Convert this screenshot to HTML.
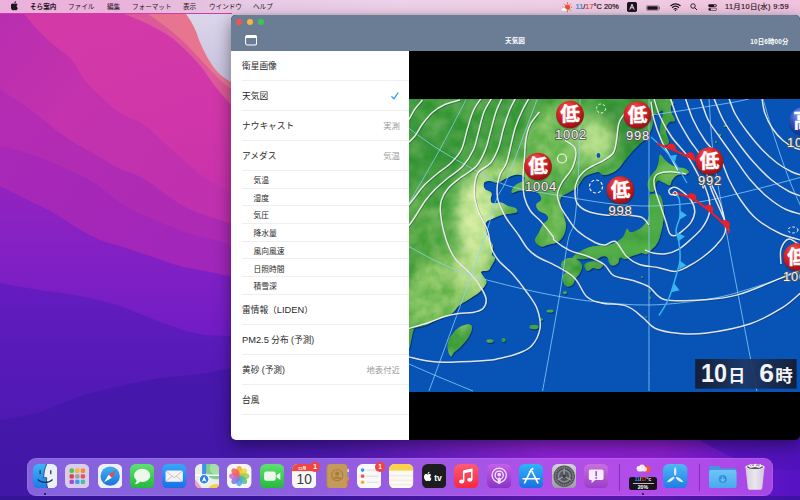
<!DOCTYPE html>
<html lang="ja">
<head>
<meta charset="utf-8">
<title>そら案内</title>
<style>
*{box-sizing:border-box;margin:0;padding:0}
html,body{width:800px;height:500px;overflow:hidden;background:#3c1a9c}
body{position:relative;font-family:"Liberation Sans","Noto Sans CJK JP",sans-serif;color:#222}
#wall{position:absolute;left:0;top:0;width:800px;height:500px}
#menubar{position:absolute;left:0;top:0;width:800px;height:13px;background:linear-gradient(90deg,#ecb1dc 0%,#eab3dc 16%,#e6bfde 24%,#e8cbe6 31%,#ebd1e9 50%,#eecfe5 68%,#f0c9e1 85%,#f0c2dd 100%);font-size:6.6px;line-height:13px;color:#1c1420;white-space:nowrap}
#menubar span{position:absolute;top:0}
#menubar .b{font-weight:700}
#win{position:absolute;left:231px;top:14.500px;width:569px;height:425.500px;border-radius:5px;overflow:hidden;background:#000;box-shadow:0 5px 16px rgba(0,0,0,.45)}
#hdr{position:absolute;left:0;top:0;width:570px;height:36.500px;background:#6a7d95}
.tl{position:absolute;top:4.600px;width:6.2px;height:6.2px;border-radius:50%}
#ttl{position:absolute;left:0;width:568px;top:21.500px;text-align:center;color:#fff;font-size:6.6px;font-weight:700;line-height:10px}
#tm{position:absolute;right:12.500px;top:22px;color:#fff;font-size:6.400px;font-weight:700;line-height:10px;letter-spacing:.15px}
#side{position:absolute;left:0;top:36.500px;width:178px;height:389px;background:#fff}
.row{position:absolute;left:0;width:178px;height:30px;font-size:8.700px;line-height:30px;padding-left:11px;color:#2a2a2a}
.row:after,.sub:after{content:"";position:absolute;left:11px;right:0;bottom:0;height:1px;background:#efefef}
.row i{position:absolute;right:9px;top:0;font-style:normal;color:#9a9a9a;font-size:8.400px}
.l{font-size:9.300px}
.sub{position:absolute;left:0;width:178px;height:17.7px;font-size:7.750px;line-height:19.700px;padding-left:22.5px;color:#2a2a2a}
#map{position:absolute;left:178px;top:84px;width:392px;height:293px}
</style>
</head>
<body>
<svg id="wall" viewBox="0 0 800 500" preserveAspectRatio="none">
<defs>
<linearGradient id="w0" x1="0" y1="0" x2="0" y2="1"><stop offset="0" stop-color="#b62bb0"/><stop offset=".35" stop-color="#b02ab4"/><stop offset=".55" stop-color="#7d1fc2"/><stop offset="1" stop-color="#5a18b4"/></linearGradient>
<linearGradient id="w1" gradientUnits="userSpaceOnUse" x1="120" y1="14" x2="180" y2="215"><stop offset="0" stop-color="#d339a7"/><stop offset=".6" stop-color="#d036a9"/><stop offset="1" stop-color="#c631ad"/></linearGradient>
<linearGradient id="wm" gradientUnits="userSpaceOnUse" x1="80" y1="14" x2="120" y2="240"><stop offset="0" stop-color="#c633ac"/><stop offset=".5" stop-color="#c130ae"/><stop offset="1" stop-color="#b02ab5"/></linearGradient>
<linearGradient id="wd" gradientUnits="userSpaceOnUse" x1="200" y1="215" x2="60" y2="330"><stop offset="0" stop-color="#b229b5"/><stop offset=".35" stop-color="#9b25bb"/><stop offset=".7" stop-color="#7a1fc3"/><stop offset="1" stop-color="#671cbf"/></linearGradient>
<linearGradient id="w5" gradientUnits="userSpaceOnUse" x1="239" y1="0" x2="800" y2="0"><stop offset="0" stop-color="#4217a8"/><stop offset=".18" stop-color="#4c18ae"/><stop offset=".36" stop-color="#6a1cbe"/><stop offset=".55" stop-color="#8a20d0"/><stop offset=".75" stop-color="#8a1ecd"/><stop offset=".9" stop-color="#6516c6"/><stop offset="1" stop-color="#5612c4"/></linearGradient>
<linearGradient id="wa" gradientUnits="userSpaceOnUse" x1="60" y1="14" x2="30" y2="300"><stop offset="0" stop-color="#b62db1"/><stop offset=".35" stop-color="#b32bb3"/><stop offset=".6" stop-color="#a026ba"/><stop offset=".85" stop-color="#7d20c3"/><stop offset="1" stop-color="#6a1cc0"/></linearGradient>
<linearGradient id="wl" x1="0" y1="0" x2="0" y2="1"><stop offset="0" stop-color="#dcd6ea"/><stop offset="1" stop-color="#c4bfdd"/></linearGradient>
<linearGradient id="wb" x1="0" y1="0" x2="0" y2="1"><stop offset="0" stop-color="#651cc0"/><stop offset=".5" stop-color="#5219b6"/><stop offset="1" stop-color="#4718ac"/></linearGradient>
<linearGradient id="wc" x1="0" y1="0" x2="0" y2="1"><stop offset="0" stop-color="#4817ac"/><stop offset="1" stop-color="#4017a6"/></linearGradient>
<linearGradient id="w6" x1="0" y1="0" x2="1" y2="0"><stop offset="0" stop-color="#3d1aa0"/><stop offset=".5" stop-color="#5a1cb0"/><stop offset="1" stop-color="#8a20c4"/></linearGradient>
<linearGradient id="g12" gradientUnits="userSpaceOnUse" x1="0" y1="20" x2="230" y2="215"><stop offset="0" stop-color="#b82eb0"/><stop offset=".35" stop-color="#c432ad"/><stop offset="1" stop-color="#bf30af"/></linearGradient>
<linearGradient id="g23" gradientUnits="userSpaceOnUse" x1="0" y1="90" x2="230" y2="240"><stop offset="0" stop-color="#b42cb2"/><stop offset="1" stop-color="#ad2ab5"/></linearGradient>
<linearGradient id="g34" gradientUnits="userSpaceOnUse" x1="0" y1="150" x2="230" y2="270"><stop offset="0" stop-color="#a828b7"/><stop offset="1" stop-color="#a026ba"/></linearGradient>
<linearGradient id="g45" gradientUnits="userSpaceOnUse" x1="0" y1="190" x2="0" y2="335"><stop offset="0" stop-color="#9123c0"/><stop offset=".5" stop-color="#8120c4"/><stop offset="1" stop-color="#711cc6"/></linearGradient>
</defs>
<rect width="800" height="500" fill="url(#w0)"/>
<!-- left wallpaper layers -->
<rect x="0" y="0" width="240" height="340" fill="url(#w1)"/>
<path d="M24.0 14.0C26.0 16.3 32.0 23.7 36.0 28.0C40.0 32.3 44.0 36.3 48.0 40.0C52.0 43.7 56.0 46.7 60.0 50.0C64.0 53.3 67.7 54.7 72.0 60.0C76.3 65.3 80.7 75.0 86.0 81.6C91.3 88.2 98.0 94.2 104.0 99.6C110.0 105.0 115.3 109.8 122.0 114.0C128.7 118.2 135.6 118.7 144.0 124.7C152.4 130.7 163.1 141.6 172.7 150.0C182.3 158.4 190.2 167.0 201.4 175.0C212.6 183.0 233.6 194.2 240.0 198.0L240 500L0 500L0 14Z" fill="url(#g12)"/>
<path d="M0.0 88.8C6.0 93.0 24.6 105.6 36.0 114.0C47.4 122.4 58.7 132.4 68.3 139.0C77.9 145.6 85.1 148.7 93.5 153.5C101.9 158.3 110.3 163.8 118.7 168.0C127.1 172.2 135.6 173.9 144.0 178.7C152.4 183.5 160.7 191.3 169.0 196.7C177.3 202.1 182.2 206.1 194.0 211.0C205.8 215.9 232.3 223.5 240.0 226.0L240 500L0 500Z" fill="url(#g23)"/>
<path d="M0.0 146.3C4.8 147.5 18.0 149.9 28.8 153.5C39.6 157.1 53.9 163.2 64.7 168.0C75.5 172.8 83.9 176.3 93.5 182.3C103.1 188.3 112.7 197.9 122.3 203.9C131.9 209.9 140.2 213.5 151.0 218.3C161.8 223.1 176.2 229.1 187.0 232.7C197.8 236.3 207.0 237.1 215.8 240.0C224.6 242.9 236.0 248.3 240.0 250.0L240 500L0 500Z" fill="url(#g34)"/>
<path d="M0.0 186.0C3.6 187.8 13.2 192.5 21.6 196.7C30.0 200.9 40.8 205.6 50.4 211.0C60.0 216.4 70.6 224.2 79.0 229.0C87.4 233.8 93.9 237.2 100.7 240.0C107.5 242.8 111.8 243.3 120.0 246.0C128.2 248.7 140.0 252.7 150.0 256.0C160.0 259.3 170.0 263.3 180.0 266.0C190.0 268.7 200.0 270.0 210.0 272.0C220.0 274.0 235.0 277.0 240.0 278.0L240 500L0 500Z" fill="url(#g45)"/>
<path d="M0.0 283.0C6.7 284.2 26.7 287.8 40.0 290.0C53.3 292.2 66.7 293.3 80.0 296.0C93.3 298.7 106.7 301.7 120.0 306.0C133.3 310.3 146.7 317.3 160.0 322.0C173.3 326.7 186.7 331.7 200.0 334.0C213.3 336.3 233.3 335.7 240.0 336.0L240 500L0 500Z" fill="url(#wb)"/>
<path d="M0.0 420.0C6.7 418.7 26.7 416.0 40.0 412.0C53.3 408.0 66.7 400.3 80.0 396.0C93.3 391.7 106.7 389.0 120.0 386.0C133.3 383.0 146.7 380.0 160.0 378.0C173.3 376.0 186.7 376.0 200.0 374.0C213.3 372.0 233.3 367.3 240.0 366.0L240 500L0 500Z" fill="url(#wc)"/>
<path d="M124 14C140 20 158 28 172 38C186 50 194 58 202 68C212 82 222 98 240 112V14Z" fill="#dc5a99"/>
<path d="M148 14C160 22 174 32 186 44C198 56 208 68 218 78C226 86 232 90 240 94V14Z" fill="#e7758f"/>
<path d="M186 14C192 22 196 30 199 40C204 52 209 61 215 69C221 77 230 82 240 86V14Z" fill="url(#wl)"/>
<rect x="232" y="0" width="568" height="20" fill="#dcc6e0"/>
<!-- bottom strip -->
<rect x="239" y="430" width="561" height="70" fill="url(#w5)"/>
<path d="M239 474C300 470 350 456 400 450C430 447 440 442 470 440H800V500H239Z" fill="url(#w6)" opacity=".0"/>
<path d="M700 440C720 452 740 462 760 466C775 470 790 470 800 470V440Z" fill="#4d12b6" opacity=".7"/>
<rect x="0" y="496" width="800" height="4" fill="#2c1288" opacity=".55"/>
</svg>

<div id="menubar">
<span style="left:10px;top:-.5px;font-size:9px"><svg width="8" height="10" viewBox="0 0 16 20" style="position:absolute;left:1px;top:1.8px"><path d="M11.2 4.3c.8-1 1.300-2.300 1.100-3.600-1.200.1-2.500.8-3.300 1.800-.7.900-1.300 2.200-1.100 3.500 1.300 0 2.500-.7 3.300-1.700zM12.300 6.200c-1.800-.1-3.300 1-4.200 1-.9 0-2.200-1-3.600-.9-1.900 0-3.600 1.100-4.500 2.800-1.900 3.300-.5 8.300 1.400 11 .9 1.300 2 2.800 3.400 2.700 1.400-.1 1.900-.9 3.500-.9s2.100.9 3.600.8c1.500 0 2.400-1.300 3.300-2.700 1-1.500 1.500-3 1.500-3.100-.1 0-2.900-1.100-2.900-4.400 0-2.700 2.200-4 2.300-4.100-1.300-1.900-3.200-2.100-3.800-2.200z" fill="#1c1420" transform="scale(.82)"/></svg></span>
<span class="b" style="left:30px">そら案内</span>
<span style="left:68px">ファイル</span>
<span style="left:107px">編集</span>
<span style="left:132px">フォーマット</span>
<span style="left:183px">表示</span>
<span style="left:209px">ウインドウ</span>
<span style="left:253px">ヘルプ</span>
<svg style="position:absolute;left:560px;top:1.500px" width="12" height="11" viewBox="0 0 24 22"><g stroke="#f0562e" stroke-width="1.800"><path d="M15 .5V4M15 17V20.500M5 10.500H8M22 10.500H25M8 3.500 10 5.500M22 3.500 20 5.500M8 17.500 10 15.500M22 17.500 20 15.500"/></g><circle cx="15" cy="10.500" r="5.400" fill="#f0562e"/><path d="M3 17.500a2.600 2.600 0 0 1 1.600-4.600 3.600 3.600 0 0 1 6.800.6 2.500 2.500 0 0 1 .2 5H5a2.600 2.600 0 0 1-2-1z" fill="#fff" stroke="#d8a8c8" stroke-width=".5"/></svg>
<span style="left:575.600px;font-size:7.400px;-webkit-text-stroke:.2px #1c1420"><b style="color:#2b86d9;font-weight:400;-webkit-text-stroke:.2px #2b86d9">11</b>/<b style="color:#e0483a;font-weight:400;-webkit-text-stroke:.2px #e0483a">17</b>°C 20%</span>
<svg style="position:absolute;left:626.800px;top:2px" width="10" height="10" viewBox="0 0 20 20"><rect width="20" height="20" rx="3.500" fill="#1c1420"/><path d="M5.500 15.500 10 4.500 14.500 15.500M7.300 11.500H12.700" fill="none" stroke="#f0d8ec" stroke-width="2"/></svg>
<svg style="position:absolute;left:646.300px;top:4.500px" width="14.500" height="6" viewBox="0 0 29 12"><rect x=".7" y=".7" width="24.600" height="10.600" rx="3" fill="none" stroke="#1c1420" stroke-opacity=".55" stroke-width="1.200"/><rect x="2.500" y="2.500" width="21" height="7" rx="1.600" fill="#1c1420"/><path d="M27 4V8" stroke="#1c1420" stroke-opacity=".55" stroke-width="1.800" stroke-linecap="round"/></svg>
<svg style="position:absolute;left:669.500px;top:3px" width="11" height="8" viewBox="0 0 22 16"><path d="M1.500 5.500a14 14 0 0 1 19 0M4.800 9a9.500 9.500 0 0 1 12.400 0M8 12.300a4.800 4.800 0 0 1 6 0" fill="none" stroke="#1c1420" stroke-width="2.100" stroke-linecap="round"/><circle cx="11" cy="14.300" r="1.500" fill="#1c1420"/></svg>
<svg style="position:absolute;left:690px;top:3.300px" width="7.500" height="7.500" viewBox="0 0 15 15"><circle cx="6" cy="6" r="4.500" fill="none" stroke="#1c1420" stroke-width="1.800"/><path d="M9.500 9.500 13.500 13.500" stroke="#1c1420" stroke-width="2" stroke-linecap="round"/></svg>
<svg style="position:absolute;left:708px;top:3.800px" width="9" height="7" viewBox="0 0 18 14"><rect x=".5" y=".5" width="17" height="5.600" rx="2.800" fill="#1c1420"/><circle cx="13.800" cy="3.300" r="1.700" fill="#e8bfdc"/><rect x="1" y="8" width="16" height="5.200" rx="2.600" fill="none" stroke="#1c1420" stroke-width="1.200"/><circle cx="4" cy="10.600" r="2" fill="#1c1420"/></svg>
<span style="left:725px;font-size:7.400px;letter-spacing:.32px;-webkit-text-stroke:.15px #1c1420">11月10日(水) 9:59</span>
</div>

<div id="win">
<div id="hdr">
<div class="tl" style="left:4.5px;background:#f0564d"></div>
<div class="tl" style="left:15.8px;background:#f6b73c"></div>
<div class="tl" style="left:27px;background:#3bc651"></div>
<svg style="position:absolute;left:14.200px;top:20.600px" width="12.200" height="10.600" viewBox="0 0 12.200 10.600"><rect x=".6" y=".6" width="11" height="9.400" rx="1.700" fill="none" stroke="#fff" stroke-width="1.050"/><rect x=".6" y=".6" width="11" height="2.300" rx="1" fill="#fff"/></svg>
<div id="ttl">天気図</div>
<div id="tm">10日6時00分</div>
</div>
<div id="side">
<div class="row" style="top:0">衛星画像</div>
<div class="row" style="top:30px">天気図<svg style="position:absolute;right:10px;top:10.5px" width="8" height="8" viewBox="0 0 8 8"><path d="M.8 4.600 2.900 6.900 7 1" fill="none" stroke="#2a9be8" stroke-width="1.250" stroke-linecap="round" stroke-linejoin="round"/></svg></div>
<div class="row" style="top:60px">ナウキャスト<i>実測</i></div>
<div class="row" style="top:90px">アメダス<i>気温</i></div>
<div class="sub" style="top:120px">気温</div>
<div class="sub" style="top:137.700px">湿度</div>
<div class="sub" style="top:155.400px">気圧</div>
<div class="sub" style="top:173.100px">降水量</div>
<div class="sub" style="top:190.800px">風向風速</div>
<div class="sub" style="top:208.500px">日照時間</div>
<div class="sub" style="top:226.200px">積雪深</div>
<div class="row" style="top:244px">雷情報（<span class="l">LIDEN</span>）</div>
<div class="row" style="top:274px"><span class="l">PM2.5</span> 分布 (予測)</div>
<div class="row" style="top:304px">黄砂 (予測)<i>地表付近</i></div>
<div class="row" style="top:334px">台風</div>
</div>
<svg id="map" viewBox="0 0 392 293" preserveAspectRatio="none">
<defs>
<clipPath id="lc"><path d="M-2.0 -2.0C47.0 -48.3 193.9 -6.0 243.0 -2.0C292.1 2.0 243.5 12.0 243.5 18.0C243.5 24.0 244.1 24.0 243.0 28.0C241.9 32.0 240.8 34.3 238.0 38.0C235.2 41.7 232.3 43.2 229.0 46.5C225.7 49.8 224.3 51.3 221.5 54.5C218.7 57.7 217.5 59.4 215.0 62.5C212.5 65.6 211.7 67.6 209.0 70.0C206.3 72.4 204.5 73.3 201.5 74.5C198.5 75.7 196.4 76.3 194.0 76.0C191.6 75.7 191.6 73.3 189.5 73.0C187.4 72.7 186.2 73.6 183.5 74.5C180.8 75.4 178.4 75.7 176.0 77.5C173.6 79.3 173.2 81.2 171.5 83.5C169.8 85.8 169.8 87.0 167.5 89.0C165.2 91.0 163.1 91.6 160.0 93.5C156.9 95.4 153.6 95.7 152.0 98.5C150.4 101.3 151.4 103.7 152.0 107.5C152.6 111.3 154.0 113.5 155.0 117.5C156.0 121.5 157.2 123.5 157.0 127.5C156.8 131.5 155.8 134.3 154.0 137.5C152.2 140.7 150.8 141.9 148.0 143.5C145.2 145.1 143.2 144.7 140.0 145.5C136.8 146.3 134.8 148.3 132.0 147.5C129.2 146.7 126.4 144.3 126.0 141.5C125.6 138.7 128.4 136.7 130.0 133.5C131.6 130.3 132.2 128.1 134.0 125.5C135.8 122.9 138.4 122.3 139.0 120.3C139.6 118.3 138.7 117.1 137.0 115.5C135.3 113.9 132.4 114.2 130.4 112.3C128.4 110.4 126.9 108.1 127.2 105.9C127.5 103.7 131.4 103.2 132.0 101.1C132.6 99.0 132.0 97.3 130.4 95.5C128.8 93.7 127.8 93.1 124.0 92.3C120.2 91.5 115.4 91.2 111.2 91.5C107.0 91.8 104.6 94.4 103.2 93.9C101.8 93.4 103.0 90.9 104.0 89.1C105.0 87.3 105.9 86.5 108.0 85.1C110.1 83.7 113.0 83.3 114.4 81.9C115.8 80.5 116.5 79.2 115.2 77.9C113.9 76.6 111.7 75.2 108.0 75.5C104.3 75.8 100.6 77.9 96.8 79.5C93.0 81.1 92.0 83.0 88.8 83.5C85.6 84.0 83.5 81.9 80.8 81.9C78.1 81.9 76.2 81.9 75.2 83.5C74.2 85.1 74.6 87.8 76.0 89.9C77.4 92.0 81.3 91.7 82.4 93.9C83.5 96.1 81.3 99.0 81.6 101.1C81.9 103.2 81.9 103.8 84.0 104.3C86.1 104.8 89.1 103.0 92.0 103.5C94.9 104.0 95.5 105.6 98.4 106.7C101.3 107.8 104.5 107.8 106.4 109.1C108.3 110.4 109.0 112.0 108.0 113.1C107.0 114.2 104.8 114.1 101.6 114.7C98.4 115.3 95.5 115.3 92.0 116.3C88.5 117.3 87.0 118.1 84.0 119.5C81.0 120.9 78.4 121.1 77.0 123.5C75.6 125.9 76.4 128.3 77.0 131.5C77.6 134.7 78.6 136.3 80.0 139.5C81.4 142.7 83.4 144.3 84.0 147.5C84.6 150.7 82.6 153.1 83.0 155.5C83.4 157.9 86.2 157.1 86.0 159.5C85.8 161.9 83.4 165.1 82.0 167.5C80.6 169.9 81.0 170.4 79.0 171.5C77.0 172.6 72.4 171.0 72.0 173.0C71.6 175.0 76.2 178.8 77.0 181.5C77.8 184.2 77.4 184.1 76.0 186.5C74.6 188.9 72.4 191.3 70.0 193.5C67.6 195.7 66.4 195.9 64.0 197.5C61.6 199.1 60.8 199.7 58.0 201.5C55.2 203.3 52.8 204.1 50.0 206.5C47.2 208.9 46.8 211.3 44.0 213.5C41.2 215.7 39.6 215.9 36.0 217.5C32.4 219.1 30.0 219.7 26.0 221.5C22.0 223.3 20.0 225.1 16.0 226.5C12.0 227.9 9.6 227.9 6.0 228.5C2.4 229.1 -0.4 275.6 -2.0 229.5C-3.6 183.4 -51.0 44.3 -2.0 -2.0Z M243.0 95.0C244.7 94.6 247.1 94.7 249.0 95.5C250.9 96.3 251.3 96.5 252.4 99.0C253.5 101.5 254.1 103.3 254.5 108.0C254.9 112.7 255.0 116.4 254.2 122.5C253.4 128.6 252.0 134.0 250.6 138.7C249.2 143.4 248.4 143.7 247.0 145.9C245.6 148.1 245.2 147.7 243.4 149.5C241.6 151.3 240.2 154.0 238.0 154.9C235.8 155.8 234.8 153.8 232.6 154.0C230.4 154.2 229.4 155.1 227.2 155.8C225.0 156.5 224.0 156.7 221.8 157.6C219.6 158.5 218.6 160.1 216.4 160.3C214.2 160.5 212.4 157.8 211.0 158.5C209.6 159.2 210.6 162.3 209.2 163.9C207.8 165.5 205.6 166.6 203.8 166.6C202.0 166.6 201.3 165.5 200.2 163.9C199.1 162.3 199.8 159.8 198.4 158.5C197.0 157.2 195.2 157.2 193.0 157.6C190.8 158.0 190.1 159.9 187.6 160.3C185.1 160.7 183.6 159.4 180.4 159.4C177.2 159.4 174.6 160.5 171.4 160.3C168.2 160.1 165.3 159.4 164.2 158.5C163.1 157.6 164.6 157.1 166.0 155.8C167.4 154.5 169.2 153.5 171.4 152.2C173.6 150.9 174.6 150.4 176.8 149.5C179.0 148.6 179.7 148.2 182.2 147.7C184.7 147.2 186.2 147.2 189.4 146.8C192.6 146.4 195.2 146.4 198.4 145.9C201.6 145.4 203.1 145.2 205.6 144.1C208.1 143.0 209.2 141.9 211.0 140.5C212.8 139.1 213.2 139.1 214.6 136.9C216.0 134.7 216.8 130.4 218.2 129.7C219.6 129.0 219.3 133.3 221.8 133.3C224.3 133.3 227.9 131.5 230.8 129.7C233.7 127.9 234.4 126.8 236.2 124.3C238.0 121.8 239.1 120.5 239.8 117.1C240.5 113.7 239.3 111.4 239.5 107.5C239.7 103.6 239.9 100.2 240.6 97.7C241.3 95.2 241.3 95.4 243.0 95.0Z M251.1 55.7C252.2 55.1 253.2 57.9 255.3 59.9C257.4 61.9 258.9 63.8 261.6 65.5C264.3 67.2 265.7 67.5 268.6 68.3C271.5 69.1 274.1 68.6 276.3 69.7C278.5 70.8 280.5 72.8 279.8 73.9C279.1 75.0 275.3 74.7 272.8 75.3C270.3 75.9 269.2 75.4 267.2 76.7C265.2 78.0 264.3 79.6 263.0 81.6C261.7 83.6 262.6 86.1 260.9 86.5C259.2 86.9 257.0 84.7 254.6 83.7C252.2 82.7 250.5 81.3 249.0 81.6C247.5 81.9 247.5 83.4 246.9 85.1C246.3 86.8 246.7 88.4 246.0 90.0C245.3 91.6 244.7 92.7 243.5 93.0C242.3 93.3 241.0 93.1 240.0 91.5C239.0 89.9 238.4 87.5 238.5 85.0C238.6 82.5 239.5 81.1 240.5 79.0C241.5 76.9 242.1 76.5 243.5 74.6C244.9 72.7 246.4 72.1 247.6 69.7C248.8 67.3 249.0 65.5 249.7 62.7C250.4 59.9 250.0 56.3 251.1 55.7Z M251.0 -2.0C252.6 -5.1 259.8 -4.7 262.0 -2.0C264.2 0.7 261.2 6.8 262.0 11.5C262.8 16.2 266.4 19.1 266.0 21.5C265.6 23.9 261.8 21.5 260.0 23.5C258.2 25.5 257.0 27.5 257.0 31.5C257.0 35.5 260.6 40.7 260.0 43.5C259.4 46.3 255.8 47.1 254.0 45.5C252.2 43.9 251.4 39.9 251.0 35.5C250.6 31.1 251.4 27.9 252.0 23.5C252.6 19.1 254.2 18.6 254.0 13.5C253.8 8.4 249.4 1.1 251.0 -2.0Z M155.2 160.7C157.8 159.1 161.3 158.1 164.8 159.1C168.3 160.1 171.5 162.6 172.8 165.5C174.1 168.4 172.5 170.6 171.2 173.5C169.9 176.4 168.1 177.3 166.5 179.9C164.9 182.5 165.0 184.9 163.0 186.3C161.0 187.7 158.4 188.4 156.5 186.8C154.6 185.2 153.5 181.3 153.6 178.3C153.7 175.3 157.1 174.1 156.8 171.9C156.5 169.7 152.3 169.3 152.0 167.1C151.7 164.9 152.6 162.3 155.2 160.7Z M176.0 165.0C177.2 163.7 179.2 162.9 182.0 162.5C184.8 162.1 187.6 162.3 190.0 163.0C192.4 163.7 194.0 164.6 194.0 166.0C194.0 167.4 192.0 169.4 190.0 170.0C188.0 170.6 186.2 168.6 184.0 169.0C181.8 169.4 180.6 172.0 179.0 172.0C177.4 172.0 176.6 170.4 176.0 169.0C175.4 167.6 174.8 166.3 176.0 165.0Z M60.0 225.5C61.4 226.0 63.0 226.1 63.0 228.5C63.0 230.9 62.2 233.7 60.0 237.5C57.8 241.3 55.0 244.3 52.0 247.5C49.0 250.7 47.0 251.5 45.0 253.5C43.0 255.5 43.2 257.9 42.0 257.5C40.8 257.1 39.6 254.3 39.0 251.5C38.4 248.7 38.2 246.7 39.0 243.5C39.8 240.3 40.8 238.5 43.0 235.5C45.2 232.5 47.4 230.4 50.0 228.5C52.6 226.6 54.0 226.6 56.0 226.0C58.0 225.4 58.6 225.0 60.0 225.5ZM77.5 242.0a3.5 1.8 0 1 0 7.0 0a3.5 1.8 0 1 0 -7.0 0ZM92.6 241.0a2 2 0 1 0 4 0a2 2 0 1 0 -4 0ZM120.5 228.0a4.5 2.2 0 1 0 9.0 0a4.5 2.2 0 1 0 -9.0 0ZM137.5 212.0a3.5 1.5 0 1 0 7.0 0a3.5 1.5 0 1 0 -7.0 0ZM130.0 220.5a2 1.2 0 1 0 4 0a2 1.2 0 1 0 -4 0ZM154.0 193.5a2 1.5 0 1 0 4 0a2 1.5 0 1 0 -4 0ZM232.0 178.0a1 1 0 1 0 2 0a1 1 0 1 0 -2 0ZM240.2 192.0a0.8 1.6 0 1 0 1.6 0a0.8 1.6 0 1 0 -1.6 0ZM240.2 199.0a0.8 1.4 0 1 0 1.6 0a0.8 1.4 0 1 0 -1.6 0ZM314.5 27.0a1.5 1 0 1 0 3.0 0a1.5 1 0 1 0 -3.0 0ZM309.8 36.0a1.2 1.2 0 1 0 2.4 0a1.2 1.2 0 1 0 -2.4 0ZM306.0 43.0a1 1.2 0 1 0 2 0a1 1.2 0 1 0 -2 0ZM302.0 50.0a1 1 0 1 0 2 0a1 1 0 1 0 -2 0ZM236.2 218.0a0.8 0.8 0 1 0 1.6 0a0.8 0.8 0 1 0 -1.6 0Z"/></clipPath>
<radialGradient id="lowg" cx=".4" cy=".3" r=".75"><stop offset="0" stop-color="#f4605a"/><stop offset=".45" stop-color="#d8252a"/><stop offset="1" stop-color="#8e0f14"/></radialGradient>
<radialGradient id="highg" cx=".4" cy=".3" r=".75"><stop offset="0" stop-color="#9ab0f0"/><stop offset=".45" stop-color="#3a55c8"/><stop offset="1" stop-color="#16247a"/></radialGradient>
<linearGradient id="dbg" x1="0" y1="0" x2="1" y2="0"><stop offset="0" stop-color="#141c33" stop-opacity=".95"/><stop offset=".5" stop-color="#1f3763" stop-opacity=".92"/><stop offset="1" stop-color="#141c33" stop-opacity=".95"/></linearGradient>
<filter id="bl" x="-20%" y="-20%" width="140%" height="140%"><feGaussianBlur stdDeviation="6"/></filter>
<filter id="bs" x="-20%" y="-20%" width="140%" height="140%"><feGaussianBlur stdDeviation="3"/></filter>
<filter id="tx2" x="0" y="0" width="100%" height="100%"><feTurbulence type="fractalNoise" baseFrequency=".06" numOctaves="2" seed="11"/><feColorMatrix values="0 0 0 0 .8  0 0 0 0 .95  0 0 0 0 .42  0 0 .9 0 -.32"/></filter>
<filter id="tx" x="0" y="0" width="100%" height="100%"><feTurbulence type="fractalNoise" baseFrequency=".09" numOctaves="3" seed="4"/><feColorMatrix values="0 0 0 0 0  0 0 0 0 .25  0 0 0 0 0  0 0 0 .9 -.28"/></filter>
</defs>
<rect width="392" height="293" fill="#0753b6"/>
<path d="M-2.0 -2.0C47.0 -48.3 193.9 -6.0 243.0 -2.0C292.1 2.0 243.5 12.0 243.5 18.0C243.5 24.0 244.1 24.0 243.0 28.0C241.9 32.0 240.8 34.3 238.0 38.0C235.2 41.7 232.3 43.2 229.0 46.5C225.7 49.8 224.3 51.3 221.5 54.5C218.7 57.7 217.5 59.4 215.0 62.5C212.5 65.6 211.7 67.6 209.0 70.0C206.3 72.4 204.5 73.3 201.5 74.5C198.5 75.7 196.4 76.3 194.0 76.0C191.6 75.7 191.6 73.3 189.5 73.0C187.4 72.7 186.2 73.6 183.5 74.5C180.8 75.4 178.4 75.7 176.0 77.5C173.6 79.3 173.2 81.2 171.5 83.5C169.8 85.8 169.8 87.0 167.5 89.0C165.2 91.0 163.1 91.6 160.0 93.5C156.9 95.4 153.6 95.7 152.0 98.5C150.4 101.3 151.4 103.7 152.0 107.5C152.6 111.3 154.0 113.5 155.0 117.5C156.0 121.5 157.2 123.5 157.0 127.5C156.8 131.5 155.8 134.3 154.0 137.5C152.2 140.7 150.8 141.9 148.0 143.5C145.2 145.1 143.2 144.7 140.0 145.5C136.8 146.3 134.8 148.3 132.0 147.5C129.2 146.7 126.4 144.3 126.0 141.5C125.6 138.7 128.4 136.7 130.0 133.5C131.6 130.3 132.2 128.1 134.0 125.5C135.8 122.9 138.4 122.3 139.0 120.3C139.6 118.3 138.7 117.1 137.0 115.5C135.3 113.9 132.4 114.2 130.4 112.3C128.4 110.4 126.9 108.1 127.2 105.9C127.5 103.7 131.4 103.2 132.0 101.1C132.6 99.0 132.0 97.3 130.4 95.5C128.8 93.7 127.8 93.1 124.0 92.3C120.2 91.5 115.4 91.2 111.2 91.5C107.0 91.8 104.6 94.4 103.2 93.9C101.8 93.4 103.0 90.9 104.0 89.1C105.0 87.3 105.9 86.5 108.0 85.1C110.1 83.7 113.0 83.3 114.4 81.9C115.8 80.5 116.5 79.2 115.2 77.9C113.9 76.6 111.7 75.2 108.0 75.5C104.3 75.8 100.6 77.9 96.8 79.5C93.0 81.1 92.0 83.0 88.8 83.5C85.6 84.0 83.5 81.9 80.8 81.9C78.1 81.9 76.2 81.9 75.2 83.5C74.2 85.1 74.6 87.8 76.0 89.9C77.4 92.0 81.3 91.7 82.4 93.9C83.5 96.1 81.3 99.0 81.6 101.1C81.9 103.2 81.9 103.8 84.0 104.3C86.1 104.8 89.1 103.0 92.0 103.5C94.9 104.0 95.5 105.6 98.4 106.7C101.3 107.8 104.5 107.8 106.4 109.1C108.3 110.4 109.0 112.0 108.0 113.1C107.0 114.2 104.8 114.1 101.6 114.7C98.4 115.3 95.5 115.3 92.0 116.3C88.5 117.3 87.0 118.1 84.0 119.5C81.0 120.9 78.4 121.1 77.0 123.5C75.6 125.9 76.4 128.3 77.0 131.5C77.6 134.7 78.6 136.3 80.0 139.5C81.4 142.7 83.4 144.3 84.0 147.5C84.6 150.7 82.6 153.1 83.0 155.5C83.4 157.9 86.2 157.1 86.0 159.5C85.8 161.9 83.4 165.1 82.0 167.5C80.6 169.9 81.0 170.4 79.0 171.5C77.0 172.6 72.4 171.0 72.0 173.0C71.6 175.0 76.2 178.8 77.0 181.5C77.8 184.2 77.4 184.1 76.0 186.5C74.6 188.9 72.4 191.3 70.0 193.5C67.6 195.7 66.4 195.9 64.0 197.5C61.6 199.1 60.8 199.7 58.0 201.5C55.2 203.3 52.8 204.1 50.0 206.5C47.2 208.9 46.8 211.3 44.0 213.5C41.2 215.7 39.6 215.9 36.0 217.5C32.4 219.1 30.0 219.7 26.0 221.5C22.0 223.3 20.0 225.1 16.0 226.5C12.0 227.9 9.6 227.9 6.0 228.5C2.4 229.1 -0.4 275.6 -2.0 229.5C-3.6 183.4 -51.0 44.3 -2.0 -2.0Z M243.0 95.0C244.7 94.6 247.1 94.7 249.0 95.5C250.9 96.3 251.3 96.5 252.4 99.0C253.5 101.5 254.1 103.3 254.5 108.0C254.9 112.7 255.0 116.4 254.2 122.5C253.4 128.6 252.0 134.0 250.6 138.7C249.2 143.4 248.4 143.7 247.0 145.9C245.6 148.1 245.2 147.7 243.4 149.5C241.6 151.3 240.2 154.0 238.0 154.9C235.8 155.8 234.8 153.8 232.6 154.0C230.4 154.2 229.4 155.1 227.2 155.8C225.0 156.5 224.0 156.7 221.8 157.6C219.6 158.5 218.6 160.1 216.4 160.3C214.2 160.5 212.4 157.8 211.0 158.5C209.6 159.2 210.6 162.3 209.2 163.9C207.8 165.5 205.6 166.6 203.8 166.6C202.0 166.6 201.3 165.5 200.2 163.9C199.1 162.3 199.8 159.8 198.4 158.5C197.0 157.2 195.2 157.2 193.0 157.6C190.8 158.0 190.1 159.9 187.6 160.3C185.1 160.7 183.6 159.4 180.4 159.4C177.2 159.4 174.6 160.5 171.4 160.3C168.2 160.1 165.3 159.4 164.2 158.5C163.1 157.6 164.6 157.1 166.0 155.8C167.4 154.5 169.2 153.5 171.4 152.2C173.6 150.9 174.6 150.4 176.8 149.5C179.0 148.6 179.7 148.2 182.2 147.7C184.7 147.2 186.2 147.2 189.4 146.8C192.6 146.4 195.2 146.4 198.4 145.9C201.6 145.4 203.1 145.2 205.6 144.1C208.1 143.0 209.2 141.9 211.0 140.5C212.8 139.1 213.2 139.1 214.6 136.9C216.0 134.7 216.8 130.4 218.2 129.7C219.6 129.0 219.3 133.3 221.8 133.3C224.3 133.3 227.9 131.5 230.8 129.7C233.7 127.9 234.4 126.8 236.2 124.3C238.0 121.8 239.1 120.5 239.8 117.1C240.5 113.7 239.3 111.4 239.5 107.5C239.7 103.6 239.9 100.2 240.6 97.7C241.3 95.2 241.3 95.4 243.0 95.0Z M251.1 55.7C252.2 55.1 253.2 57.9 255.3 59.9C257.4 61.9 258.9 63.8 261.6 65.5C264.3 67.2 265.7 67.5 268.6 68.3C271.5 69.1 274.1 68.6 276.3 69.7C278.5 70.8 280.5 72.8 279.8 73.9C279.1 75.0 275.3 74.7 272.8 75.3C270.3 75.9 269.2 75.4 267.2 76.7C265.2 78.0 264.3 79.6 263.0 81.6C261.7 83.6 262.6 86.1 260.9 86.5C259.2 86.9 257.0 84.7 254.6 83.7C252.2 82.7 250.5 81.3 249.0 81.6C247.5 81.9 247.5 83.4 246.9 85.1C246.3 86.8 246.7 88.4 246.0 90.0C245.3 91.6 244.7 92.7 243.5 93.0C242.3 93.3 241.0 93.1 240.0 91.5C239.0 89.9 238.4 87.5 238.5 85.0C238.6 82.5 239.5 81.1 240.5 79.0C241.5 76.9 242.1 76.5 243.5 74.6C244.9 72.7 246.4 72.1 247.6 69.7C248.8 67.3 249.0 65.5 249.7 62.7C250.4 59.9 250.0 56.3 251.1 55.7Z M251.0 -2.0C252.6 -5.1 259.8 -4.7 262.0 -2.0C264.2 0.7 261.2 6.8 262.0 11.5C262.8 16.2 266.4 19.1 266.0 21.5C265.6 23.9 261.8 21.5 260.0 23.5C258.2 25.5 257.0 27.5 257.0 31.5C257.0 35.5 260.6 40.7 260.0 43.5C259.4 46.3 255.8 47.1 254.0 45.5C252.2 43.9 251.4 39.9 251.0 35.5C250.6 31.1 251.4 27.9 252.0 23.5C252.6 19.1 254.2 18.6 254.0 13.5C253.8 8.4 249.4 1.1 251.0 -2.0Z M155.2 160.7C157.8 159.1 161.3 158.1 164.8 159.1C168.3 160.1 171.5 162.6 172.8 165.5C174.1 168.4 172.5 170.6 171.2 173.5C169.9 176.4 168.1 177.3 166.5 179.9C164.9 182.5 165.0 184.9 163.0 186.3C161.0 187.7 158.4 188.4 156.5 186.8C154.6 185.2 153.5 181.3 153.6 178.3C153.7 175.3 157.1 174.1 156.8 171.9C156.5 169.7 152.3 169.3 152.0 167.1C151.7 164.9 152.6 162.3 155.2 160.7Z M176.0 165.0C177.2 163.7 179.2 162.9 182.0 162.5C184.8 162.1 187.6 162.3 190.0 163.0C192.4 163.7 194.0 164.6 194.0 166.0C194.0 167.4 192.0 169.4 190.0 170.0C188.0 170.6 186.2 168.6 184.0 169.0C181.8 169.4 180.6 172.0 179.0 172.0C177.4 172.0 176.6 170.4 176.0 169.0C175.4 167.6 174.8 166.3 176.0 165.0Z M60.0 225.5C61.4 226.0 63.0 226.1 63.0 228.5C63.0 230.9 62.2 233.7 60.0 237.5C57.8 241.3 55.0 244.3 52.0 247.5C49.0 250.7 47.0 251.5 45.0 253.5C43.0 255.5 43.2 257.9 42.0 257.5C40.8 257.1 39.6 254.3 39.0 251.5C38.4 248.7 38.2 246.7 39.0 243.5C39.8 240.3 40.8 238.5 43.0 235.5C45.2 232.5 47.4 230.4 50.0 228.5C52.6 226.6 54.0 226.6 56.0 226.0C58.0 225.4 58.6 225.0 60.0 225.5ZM77.5 242.0a3.5 1.8 0 1 0 7.0 0a3.5 1.8 0 1 0 -7.0 0ZM92.6 241.0a2 2 0 1 0 4 0a2 2 0 1 0 -4 0ZM120.5 228.0a4.5 2.2 0 1 0 9.0 0a4.5 2.2 0 1 0 -9.0 0ZM137.5 212.0a3.5 1.5 0 1 0 7.0 0a3.5 1.5 0 1 0 -7.0 0ZM130.0 220.5a2 1.2 0 1 0 4 0a2 1.2 0 1 0 -4 0ZM154.0 193.5a2 1.5 0 1 0 4 0a2 1.5 0 1 0 -4 0ZM232.0 178.0a1 1 0 1 0 2 0a1 1 0 1 0 -2 0ZM240.2 192.0a0.8 1.6 0 1 0 1.6 0a0.8 1.6 0 1 0 -1.6 0ZM240.2 199.0a0.8 1.4 0 1 0 1.6 0a0.8 1.4 0 1 0 -1.6 0ZM314.5 27.0a1.5 1 0 1 0 3.0 0a1.5 1 0 1 0 -3.0 0ZM309.8 36.0a1.2 1.2 0 1 0 2.4 0a1.2 1.2 0 1 0 -2.4 0ZM306.0 43.0a1 1.2 0 1 0 2 0a1 1.2 0 1 0 -2 0ZM302.0 50.0a1 1 0 1 0 2 0a1 1 0 1 0 -2 0ZM236.2 218.0a0.8 0.8 0 1 0 1.6 0a0.8 0.8 0 1 0 -1.6 0Z" fill="#06307e" transform="translate(.9 1.300)" opacity=".85"/>
<g clip-path="url(#lc)">
<rect width="392" height="293" fill="#4ba346"/>
<g filter="url(#bl)">
<ellipse cx="60" cy="15" rx="90" ry="38" fill="#3f9a40"/>
<ellipse cx="15" cy="60" rx="35" ry="30" fill="#3a953d"/>
<ellipse cx="222" cy="25" rx="30" ry="34" fill="#348f3b"/>
<ellipse cx="5" cy="110" rx="22" ry="60" fill="#3f983f"/>
<ellipse cx="150" cy="42" rx="32" ry="36" fill="#7cc060"/>
<ellipse cx="186" cy="42" rx="18" ry="24" fill="#a8d882"/>
<ellipse cx="70" cy="118" rx="24" ry="46" fill="#bfe092"/>
<ellipse cx="68" cy="125" rx="18" ry="40" fill="#c8e69a"/>
<ellipse cx="66" cy="120" rx="12" ry="30" fill="#cce89c"/>
<ellipse cx="98" cy="72" rx="30" ry="12" fill="#a6d47a"/>
<ellipse cx="45" cy="190" rx="42" ry="38" fill="#8ec868"/>
<ellipse cx="66" cy="168" rx="18" ry="22" fill="#b6db88"/>
<ellipse cx="12" cy="130" rx="24" ry="34" fill="#58a84a"/>
<ellipse cx="20" cy="210" rx="28" ry="20" fill="#86c464"/>
<ellipse cx="143" cy="122" rx="14" ry="26" fill="#74bd5a"/>
<ellipse cx="114" cy="99" rx="14" ry="8" fill="#a0d074"/>
</g>
<rect width="392" height="293" filter="url(#tx)" opacity=".68"/>
<rect width="392" height="293" filter="url(#tx2)" opacity=".5"/>
<g filter="url(#bl)" opacity=".55"><ellipse cx="68" cy="122" rx="15" ry="40" fill="#dcf0a8"/><ellipse cx="60" cy="175" rx="14" ry="16" fill="#d4eca0"/><ellipse cx="188" cy="42" rx="12" ry="18" fill="#c8e898"/></g>
<g filter="url(#bs)" opacity=".9">
<ellipse cx="215" cy="150" rx="40" ry="8" fill="#52b048"/>
<ellipse cx="247" cy="118" rx="8" ry="28" fill="#4eac46"/>
<ellipse cx="262" cy="72" rx="16" ry="10" fill="#6cbc58"/>
</g>
</g>
<path d="M57.0 0.5C52.5 9.1 39.5 34.8 30.0 52.0C20.5 69.2 5.0 95.3 0.0 104.0 M0.0 29.5C5.0 33.0 17.0 42.5 30.0 50.5C43.0 58.5 65.8 71.2 78.0 77.5C90.2 83.8 92.5 85.0 103.5 88.0C114.5 91.0 127.9 92.8 144.0 95.5C160.1 98.2 183.5 102.6 200.0 104.5C216.5 106.4 228.0 107.2 243.0 107.0C258.0 106.8 273.8 105.5 290.0 103.0C306.2 100.5 322.8 96.2 340.0 92.0C357.2 87.8 384.2 80.3 393.0 78.0 M128.0 0.5C123.2 13.3 105.8 60.7 99.0 77.5C92.2 94.3 91.5 89.5 87.0 101.5C82.5 113.5 83.2 117.8 72.0 149.5C60.8 181.2 28.7 268.2 20.0 292.0 M171.0 0.0C170.8 10.0 170.8 40.0 170.0 60.0C169.2 80.0 167.8 106.4 166.0 120.0C164.2 133.6 161.7 128.2 159.0 141.5C156.3 154.8 154.2 174.9 150.0 200.0C145.8 225.1 136.3 276.7 133.6 292.0 M-2.0 146.5C3.3 149.3 19.7 158.7 30.0 163.5C40.3 168.3 51.7 172.5 60.0 175.5C68.3 178.5 68.3 178.5 80.0 181.5C91.7 184.5 113.3 190.1 130.0 193.5C146.7 196.9 161.7 199.9 180.0 202.0C198.3 204.1 220.0 206.3 240.0 206.0C260.0 205.7 283.3 202.7 300.0 200.0C316.7 197.3 324.5 194.7 340.0 190.0C355.5 185.3 384.2 175.0 393.0 172.0 M240.0 0.0C240.0 16.7 240.0 51.3 240.0 100.0C240.0 148.7 240.0 260.0 240.0 292.0 M300.0 0.0C300.8 10.0 301.8 36.4 305.0 60.0C308.2 83.6 314.8 118.2 319.0 141.5C323.2 164.8 325.2 174.9 330.0 200.0C334.8 225.1 344.8 276.7 347.8 292.0 M230.0 18.0C236.7 17.0 255.0 14.3 270.0 12.0C285.0 9.7 308.3 6.0 320.0 4.0C331.7 2.0 336.7 0.7 340.0 0.0 M0.0 265.0C5.0 267.2 19.3 273.5 30.0 278.0C40.7 282.5 58.3 289.7 64.0 292.0 M354.0 0.0C356.0 6.7 361.7 26.7 366.0 40.0C370.3 53.3 375.5 68.3 380.0 80.0C384.5 91.7 390.8 105.0 393.0 110.0" fill="none" stroke="#8fd2fa" stroke-width=".9" opacity=".85"/>
<path d="M13.5 1.0C12.2 2.5 8.2 6.8 6.0 10.0C3.8 13.2 1.0 18.8 0.0 20.5 M51.0 1.0C48.5 1.8 40.5 3.5 36.0 5.5C31.5 7.5 27.8 9.8 24.0 13.0C20.2 16.2 16.5 21.0 13.5 25.0C10.5 29.0 8.5 33.8 6.0 37.0C3.5 40.2 -0.2 43.2 -1.5 44.5 M72.0 -0.5C70.8 1.5 66.8 6.5 64.5 11.5C62.2 16.5 60.5 23.0 58.5 29.5C56.5 36.0 55.2 44.8 52.5 50.5C49.8 56.2 46.0 60.0 42.0 64.0C38.0 68.0 33.0 70.8 28.5 74.5C24.0 78.2 19.0 82.2 15.0 86.5C11.0 90.8 7.2 96.5 4.5 100.0C1.8 103.5 -0.5 106.2 -1.5 107.5 M82.5 -0.5C81.2 1.8 77.2 7.5 75.0 13.0C72.8 18.5 71.3 26.2 69.6 32.5C67.8 38.8 67.1 44.8 64.5 50.5C61.9 56.2 58.2 62.2 54.0 67.0C49.8 71.8 43.8 75.0 39.0 79.0C34.2 83.0 29.2 87.2 25.5 91.0C21.8 94.8 19.8 97.0 16.5 101.5C13.2 106.0 9.0 113.5 6.0 118.0C3.0 122.5 -0.2 126.8 -1.5 128.5 M93.0 -0.5C92.0 1.8 88.9 7.5 87.0 13.0C85.1 18.5 83.3 26.2 81.6 32.5C79.8 38.8 78.8 44.8 76.5 50.5C74.2 56.2 71.8 62.2 67.5 67.0C63.2 71.8 55.8 75.2 51.0 79.0C46.2 82.8 42.1 85.8 39.0 89.5C35.9 93.2 33.6 97.5 32.4 101.5C31.1 105.5 31.1 108.5 31.5 113.5C31.9 118.5 33.0 125.5 34.5 131.5C36.0 137.5 38.2 144.4 40.5 149.5C42.8 154.6 44.8 158.0 48.0 162.0C51.2 166.0 56.3 169.6 60.0 173.5C63.7 177.4 67.2 181.2 70.0 185.5C72.8 189.8 76.3 195.5 77.0 199.5C77.7 203.5 76.2 207.2 74.0 209.5C71.8 211.8 68.0 212.7 64.0 213.5C60.0 214.3 54.7 213.8 50.0 214.5C45.3 215.2 41.0 216.0 36.0 217.5C31.0 219.0 26.3 221.4 20.0 223.5C13.7 225.6 1.7 228.9 -2.0 230.0 M106.5 -0.5C105.5 1.5 102.5 6.5 100.5 11.5C98.5 16.5 96.3 23.2 94.5 29.5C92.7 35.8 91.5 43.2 89.4 49.0C87.2 54.8 84.9 60.0 81.6 64.0C78.3 68.0 72.2 69.8 69.6 73.0C67.0 76.2 66.6 79.0 66.0 83.5C65.4 88.0 65.2 94.8 66.0 100.0C66.8 105.2 68.4 109.8 70.5 115.0C72.6 120.2 76.6 125.8 78.6 131.5C80.6 137.2 80.6 144.4 82.5 149.5C84.4 154.6 86.4 157.7 90.0 162.0C93.6 166.3 99.3 170.2 104.0 175.5C108.7 180.8 114.0 187.8 118.0 193.5C122.0 199.2 125.8 203.5 128.0 209.5C130.2 215.5 132.0 223.2 131.0 229.5C130.0 235.8 126.2 243.2 122.0 247.5C117.8 251.8 111.3 253.5 106.0 255.5C100.7 257.5 95.0 258.5 90.0 259.5C85.0 260.5 86.3 260.9 76.0 261.5C65.7 262.1 41.0 263.7 28.0 263.0C15.0 262.3 3.0 258.4 -2.0 257.5 M120.0 -0.5C118.9 1.5 115.6 6.8 113.4 11.5C111.1 16.2 108.4 22.2 106.5 28.0C104.6 33.8 103.5 40.0 102.0 46.0C100.5 52.0 99.2 59.2 97.5 64.0C95.8 68.8 93.0 71.0 91.5 74.5C90.0 78.0 89.0 81.0 88.5 85.0C88.0 89.0 88.0 94.8 88.5 98.5C89.0 102.2 90.0 104.0 91.5 107.5C93.0 111.0 94.5 114.8 97.5 119.5C100.5 124.2 106.0 131.0 109.5 136.0C113.0 141.0 115.4 145.9 118.5 149.5C121.6 153.1 122.7 154.3 128.0 157.5C133.3 160.7 144.0 165.0 150.4 168.7C156.8 172.4 161.9 175.1 166.4 179.9C170.9 184.7 173.3 193.5 177.6 197.5C181.9 201.5 185.3 202.3 192.0 203.9C198.7 205.5 210.7 204.7 217.6 207.1C224.5 209.5 228.8 214.6 233.6 218.3C238.4 222.0 240.5 226.8 246.4 229.5C252.3 232.2 260.5 233.5 268.8 234.3C277.1 235.1 283.9 235.9 296.0 234.3C308.1 232.7 328.5 229.0 341.4 224.7C354.3 220.4 364.8 214.0 373.4 208.7C382.0 203.4 389.7 195.4 393.0 192.7 M130.5 13.0C129.0 15.0 123.8 20.5 121.5 25.0C119.2 29.5 118.0 34.2 117.0 40.0C116.0 45.8 116.0 52.8 115.5 59.5C115.0 66.2 114.0 74.0 114.0 80.5C114.0 87.0 114.2 93.2 115.5 98.5C116.8 103.8 118.8 108.0 121.5 112.0C124.2 116.0 128.2 118.2 132.0 122.5C135.8 126.8 141.7 134.3 144.0 137.5C146.3 140.7 142.9 139.2 145.6 141.5C148.3 143.8 154.4 148.4 160.0 151.1C165.6 153.8 173.3 155.1 179.2 157.5C185.1 159.9 190.9 162.3 195.2 165.5C199.5 168.7 200.0 174.0 204.8 176.7C209.6 179.4 218.1 179.6 224.0 181.5C229.9 183.4 234.7 184.7 240.0 187.9C245.3 191.1 246.7 198.6 256.0 200.7C265.3 202.8 283.9 201.5 296.0 200.7C308.1 199.9 316.3 199.4 328.6 195.9C340.9 192.4 359.3 184.2 370.0 179.9C380.7 175.6 389.2 171.7 393.0 170.0 M156.0 41.5C157.8 43.0 165.2 46.0 166.5 50.5C167.8 55.0 165.8 63.0 163.5 68.5C161.2 74.0 155.5 79.0 153.0 83.5C150.5 88.0 148.8 91.5 148.5 95.5C148.2 99.5 149.8 103.5 151.5 107.5C153.2 111.5 156.2 115.5 159.0 119.5C161.8 123.5 163.5 127.5 168.0 131.5C172.5 135.5 181.3 141.1 186.0 143.5C190.7 145.9 192.6 146.2 196.0 146.0C199.4 145.8 202.8 140.6 206.4 142.5C210.0 144.4 213.6 153.7 217.6 157.5C221.6 161.3 225.1 163.6 230.4 165.5C235.7 167.4 243.7 167.5 249.6 168.7C255.5 169.9 260.9 172.6 265.6 172.5C270.3 172.4 273.6 170.2 278.0 168.0C282.4 165.8 287.1 163.2 292.0 159.5C296.9 155.8 303.4 150.6 307.5 145.9C311.6 141.2 315.7 137.9 316.5 131.5C317.3 125.1 314.6 115.1 312.3 107.5C310.0 99.9 304.3 89.5 302.7 85.9 M216.0 14.0C215.0 15.7 211.4 19.4 210.0 24.0C208.6 28.6 208.4 36.6 207.5 41.5C206.6 46.4 206.5 50.2 204.5 53.5C202.5 56.8 199.0 58.8 195.5 61.0C192.0 63.2 187.0 65.0 183.5 67.0C180.0 69.0 177.1 70.5 174.5 73.0C171.9 75.5 169.4 78.8 168.0 82.0C166.6 85.2 166.0 88.3 166.0 92.0C166.0 95.7 166.0 100.7 168.0 104.0C170.0 107.3 173.3 110.0 178.0 112.0C182.7 114.0 190.0 115.3 196.0 116.0C202.0 116.7 208.0 115.7 214.0 116.0C220.0 116.3 227.7 116.3 232.0 118.0C236.3 119.7 238.7 124.7 240.0 126.0 M236.0 151.0C237.5 151.6 241.5 153.7 245.0 154.3C248.5 154.9 253.0 155.4 257.0 154.8C261.0 154.2 265.0 153.0 269.0 150.7C273.0 148.4 277.0 144.7 281.0 141.1C285.0 137.5 289.8 133.5 293.0 129.1C296.2 124.7 299.0 119.5 300.2 114.7C301.4 109.9 301.0 105.1 300.2 100.3C299.4 95.5 296.2 88.3 295.4 85.9 M245.0 -0.5C246.0 2.5 248.0 11.0 251.0 17.5C254.0 24.0 258.5 32.0 263.0 38.5C267.5 45.0 273.5 50.0 278.0 56.5C282.5 63.0 287.2 72.0 290.0 77.5C292.8 83.0 293.8 87.5 294.5 89.5 M261.5 -0.5C262.8 3.0 265.8 13.5 269.0 20.5C272.2 27.5 277.0 35.0 281.0 41.5C285.0 48.0 289.5 51.5 293.0 59.5C296.5 67.5 299.0 81.0 302.0 89.5C305.0 98.0 308.0 103.5 311.0 110.5C314.0 117.5 318.5 128.0 320.0 131.5 M276.5 -0.5C277.8 3.0 280.8 13.5 284.0 20.5C287.2 27.5 291.5 35.0 296.0 41.5C300.5 48.0 307.0 53.0 311.0 59.5C315.0 66.0 316.5 73.5 320.0 80.5C323.5 87.5 327.5 95.0 332.0 101.5C336.5 108.0 340.5 114.0 347.0 119.5C353.5 125.0 363.0 130.8 371.0 134.5C379.0 138.2 391.0 140.8 395.0 142.0 M291.5 -0.5C292.8 3.0 295.8 14.0 299.0 20.5C302.2 27.0 306.5 32.0 311.0 38.5C315.5 45.0 321.0 52.5 326.0 59.5C331.0 66.5 335.5 74.0 341.0 80.5C346.5 87.0 353.0 93.5 359.0 98.5C365.0 103.5 371.0 107.6 377.0 110.5C383.0 113.4 392.0 115.0 395.0 115.9 M305.0 -0.5C306.5 3.0 310.2 13.5 314.0 20.5C317.8 27.5 322.5 34.5 327.5 41.5C332.5 48.5 338.2 56.0 344.0 62.5C349.8 69.0 356.0 75.5 362.0 80.5C368.0 85.5 374.5 89.6 380.0 92.5C385.5 95.4 392.5 97.0 395.0 97.9 M320.0 -0.5C321.0 2.0 323.0 9.0 326.0 14.5C329.0 20.0 333.5 26.5 338.0 32.5C342.5 38.5 348.0 45.2 353.0 50.5C358.0 55.8 363.0 60.2 368.0 64.0C373.0 67.8 378.5 70.8 383.0 73.0C387.5 75.2 393.0 76.2 395.0 76.9 M353.0 -0.5C353.5 2.0 354.2 9.5 356.0 14.5C357.8 19.5 360.5 25.0 363.5 29.5C366.5 34.0 370.2 38.2 374.0 41.5C377.8 44.8 382.5 47.4 386.0 49.0C389.5 50.6 393.5 50.8 395.0 51.1 M242.0 2.5C242.5 5.5 243.2 14.0 245.0 20.5C246.8 27.0 249.8 35.2 252.5 41.5C255.2 47.8 258.8 53.0 261.5 58.0C264.2 63.0 267.8 69.2 269.0 71.5 M270.2 95.5C268.8 95.5 263.5 96.2 261.8 95.5C260.1 94.8 259.5 92.4 260.1 91.2C260.7 90.0 263.3 88.2 265.4 88.3C267.5 88.4 269.8 89.7 272.6 91.9C275.4 94.1 280.0 98.1 282.2 101.5C284.4 104.9 285.8 108.7 285.8 112.3C285.8 115.9 284.4 119.7 282.2 123.1C280.0 126.5 275.4 130.4 272.6 132.7C269.8 135.0 267.4 136.5 265.4 136.8C263.4 137.1 262.0 136.7 260.6 134.4C259.2 132.1 258.6 128.0 257.0 123.1C255.4 118.2 252.8 110.5 251.0 105.1C249.2 99.7 247.2 94.7 246.2 90.7C245.2 86.7 244.6 83.7 245.0 81.1C245.4 78.5 245.8 76.5 248.6 75.1C251.4 73.7 257.0 72.7 261.8 72.7C266.6 72.7 274.8 74.7 277.4 75.1 M393.0 148.0C390.8 146.7 383.5 139.7 380.0 140.0C376.5 140.3 373.3 145.8 372.0 150.0C370.7 154.2 372.0 162.5 372.0 165.0" fill="none" stroke="#1a2a3a" stroke-width="1.500" opacity=".45" transform="translate(.6 .7)"/>
<path d="M13.5 1.0C12.2 2.5 8.2 6.8 6.0 10.0C3.8 13.2 1.0 18.8 0.0 20.5 M51.0 1.0C48.5 1.8 40.5 3.5 36.0 5.5C31.5 7.5 27.8 9.8 24.0 13.0C20.2 16.2 16.5 21.0 13.5 25.0C10.5 29.0 8.5 33.8 6.0 37.0C3.5 40.2 -0.2 43.2 -1.5 44.5 M72.0 -0.5C70.8 1.5 66.8 6.5 64.5 11.5C62.2 16.5 60.5 23.0 58.5 29.5C56.5 36.0 55.2 44.8 52.5 50.5C49.8 56.2 46.0 60.0 42.0 64.0C38.0 68.0 33.0 70.8 28.5 74.5C24.0 78.2 19.0 82.2 15.0 86.5C11.0 90.8 7.2 96.5 4.5 100.0C1.8 103.5 -0.5 106.2 -1.5 107.5 M82.5 -0.5C81.2 1.8 77.2 7.5 75.0 13.0C72.8 18.5 71.3 26.2 69.6 32.5C67.8 38.8 67.1 44.8 64.5 50.5C61.9 56.2 58.2 62.2 54.0 67.0C49.8 71.8 43.8 75.0 39.0 79.0C34.2 83.0 29.2 87.2 25.5 91.0C21.8 94.8 19.8 97.0 16.5 101.5C13.2 106.0 9.0 113.5 6.0 118.0C3.0 122.5 -0.2 126.8 -1.5 128.5 M93.0 -0.5C92.0 1.8 88.9 7.5 87.0 13.0C85.1 18.5 83.3 26.2 81.6 32.5C79.8 38.8 78.8 44.8 76.5 50.5C74.2 56.2 71.8 62.2 67.5 67.0C63.2 71.8 55.8 75.2 51.0 79.0C46.2 82.8 42.1 85.8 39.0 89.5C35.9 93.2 33.6 97.5 32.4 101.5C31.1 105.5 31.1 108.5 31.5 113.5C31.9 118.5 33.0 125.5 34.5 131.5C36.0 137.5 38.2 144.4 40.5 149.5C42.8 154.6 44.8 158.0 48.0 162.0C51.2 166.0 56.3 169.6 60.0 173.5C63.7 177.4 67.2 181.2 70.0 185.5C72.8 189.8 76.3 195.5 77.0 199.5C77.7 203.5 76.2 207.2 74.0 209.5C71.8 211.8 68.0 212.7 64.0 213.5C60.0 214.3 54.7 213.8 50.0 214.5C45.3 215.2 41.0 216.0 36.0 217.5C31.0 219.0 26.3 221.4 20.0 223.5C13.7 225.6 1.7 228.9 -2.0 230.0 M106.5 -0.5C105.5 1.5 102.5 6.5 100.5 11.5C98.5 16.5 96.3 23.2 94.5 29.5C92.7 35.8 91.5 43.2 89.4 49.0C87.2 54.8 84.9 60.0 81.6 64.0C78.3 68.0 72.2 69.8 69.6 73.0C67.0 76.2 66.6 79.0 66.0 83.5C65.4 88.0 65.2 94.8 66.0 100.0C66.8 105.2 68.4 109.8 70.5 115.0C72.6 120.2 76.6 125.8 78.6 131.5C80.6 137.2 80.6 144.4 82.5 149.5C84.4 154.6 86.4 157.7 90.0 162.0C93.6 166.3 99.3 170.2 104.0 175.5C108.7 180.8 114.0 187.8 118.0 193.5C122.0 199.2 125.8 203.5 128.0 209.5C130.2 215.5 132.0 223.2 131.0 229.5C130.0 235.8 126.2 243.2 122.0 247.5C117.8 251.8 111.3 253.5 106.0 255.5C100.7 257.5 95.0 258.5 90.0 259.5C85.0 260.5 86.3 260.9 76.0 261.5C65.7 262.1 41.0 263.7 28.0 263.0C15.0 262.3 3.0 258.4 -2.0 257.5 M120.0 -0.5C118.9 1.5 115.6 6.8 113.4 11.5C111.1 16.2 108.4 22.2 106.5 28.0C104.6 33.8 103.5 40.0 102.0 46.0C100.5 52.0 99.2 59.2 97.5 64.0C95.8 68.8 93.0 71.0 91.5 74.5C90.0 78.0 89.0 81.0 88.5 85.0C88.0 89.0 88.0 94.8 88.5 98.5C89.0 102.2 90.0 104.0 91.5 107.5C93.0 111.0 94.5 114.8 97.5 119.5C100.5 124.2 106.0 131.0 109.5 136.0C113.0 141.0 115.4 145.9 118.5 149.5C121.6 153.1 122.7 154.3 128.0 157.5C133.3 160.7 144.0 165.0 150.4 168.7C156.8 172.4 161.9 175.1 166.4 179.9C170.9 184.7 173.3 193.5 177.6 197.5C181.9 201.5 185.3 202.3 192.0 203.9C198.7 205.5 210.7 204.7 217.6 207.1C224.5 209.5 228.8 214.6 233.6 218.3C238.4 222.0 240.5 226.8 246.4 229.5C252.3 232.2 260.5 233.5 268.8 234.3C277.1 235.1 283.9 235.9 296.0 234.3C308.1 232.7 328.5 229.0 341.4 224.7C354.3 220.4 364.8 214.0 373.4 208.7C382.0 203.4 389.7 195.4 393.0 192.7 M130.5 13.0C129.0 15.0 123.8 20.5 121.5 25.0C119.2 29.5 118.0 34.2 117.0 40.0C116.0 45.8 116.0 52.8 115.5 59.5C115.0 66.2 114.0 74.0 114.0 80.5C114.0 87.0 114.2 93.2 115.5 98.5C116.8 103.8 118.8 108.0 121.5 112.0C124.2 116.0 128.2 118.2 132.0 122.5C135.8 126.8 141.7 134.3 144.0 137.5C146.3 140.7 142.9 139.2 145.6 141.5C148.3 143.8 154.4 148.4 160.0 151.1C165.6 153.8 173.3 155.1 179.2 157.5C185.1 159.9 190.9 162.3 195.2 165.5C199.5 168.7 200.0 174.0 204.8 176.7C209.6 179.4 218.1 179.6 224.0 181.5C229.9 183.4 234.7 184.7 240.0 187.9C245.3 191.1 246.7 198.6 256.0 200.7C265.3 202.8 283.9 201.5 296.0 200.7C308.1 199.9 316.3 199.4 328.6 195.9C340.9 192.4 359.3 184.2 370.0 179.9C380.7 175.6 389.2 171.7 393.0 170.0 M156.0 41.5C157.8 43.0 165.2 46.0 166.5 50.5C167.8 55.0 165.8 63.0 163.5 68.5C161.2 74.0 155.5 79.0 153.0 83.5C150.5 88.0 148.8 91.5 148.5 95.5C148.2 99.5 149.8 103.5 151.5 107.5C153.2 111.5 156.2 115.5 159.0 119.5C161.8 123.5 163.5 127.5 168.0 131.5C172.5 135.5 181.3 141.1 186.0 143.5C190.7 145.9 192.6 146.2 196.0 146.0C199.4 145.8 202.8 140.6 206.4 142.5C210.0 144.4 213.6 153.7 217.6 157.5C221.6 161.3 225.1 163.6 230.4 165.5C235.7 167.4 243.7 167.5 249.6 168.7C255.5 169.9 260.9 172.6 265.6 172.5C270.3 172.4 273.6 170.2 278.0 168.0C282.4 165.8 287.1 163.2 292.0 159.5C296.9 155.8 303.4 150.6 307.5 145.9C311.6 141.2 315.7 137.9 316.5 131.5C317.3 125.1 314.6 115.1 312.3 107.5C310.0 99.9 304.3 89.5 302.7 85.9 M216.0 14.0C215.0 15.7 211.4 19.4 210.0 24.0C208.6 28.6 208.4 36.6 207.5 41.5C206.6 46.4 206.5 50.2 204.5 53.5C202.5 56.8 199.0 58.8 195.5 61.0C192.0 63.2 187.0 65.0 183.5 67.0C180.0 69.0 177.1 70.5 174.5 73.0C171.9 75.5 169.4 78.8 168.0 82.0C166.6 85.2 166.0 88.3 166.0 92.0C166.0 95.7 166.0 100.7 168.0 104.0C170.0 107.3 173.3 110.0 178.0 112.0C182.7 114.0 190.0 115.3 196.0 116.0C202.0 116.7 208.0 115.7 214.0 116.0C220.0 116.3 227.7 116.3 232.0 118.0C236.3 119.7 238.7 124.7 240.0 126.0 M236.0 151.0C237.5 151.6 241.5 153.7 245.0 154.3C248.5 154.9 253.0 155.4 257.0 154.8C261.0 154.2 265.0 153.0 269.0 150.7C273.0 148.4 277.0 144.7 281.0 141.1C285.0 137.5 289.8 133.5 293.0 129.1C296.2 124.7 299.0 119.5 300.2 114.7C301.4 109.9 301.0 105.1 300.2 100.3C299.4 95.5 296.2 88.3 295.4 85.9 M245.0 -0.5C246.0 2.5 248.0 11.0 251.0 17.5C254.0 24.0 258.5 32.0 263.0 38.5C267.5 45.0 273.5 50.0 278.0 56.5C282.5 63.0 287.2 72.0 290.0 77.5C292.8 83.0 293.8 87.5 294.5 89.5 M261.5 -0.5C262.8 3.0 265.8 13.5 269.0 20.5C272.2 27.5 277.0 35.0 281.0 41.5C285.0 48.0 289.5 51.5 293.0 59.5C296.5 67.5 299.0 81.0 302.0 89.5C305.0 98.0 308.0 103.5 311.0 110.5C314.0 117.5 318.5 128.0 320.0 131.5 M276.5 -0.5C277.8 3.0 280.8 13.5 284.0 20.5C287.2 27.5 291.5 35.0 296.0 41.5C300.5 48.0 307.0 53.0 311.0 59.5C315.0 66.0 316.5 73.5 320.0 80.5C323.5 87.5 327.5 95.0 332.0 101.5C336.5 108.0 340.5 114.0 347.0 119.5C353.5 125.0 363.0 130.8 371.0 134.5C379.0 138.2 391.0 140.8 395.0 142.0 M291.5 -0.5C292.8 3.0 295.8 14.0 299.0 20.5C302.2 27.0 306.5 32.0 311.0 38.5C315.5 45.0 321.0 52.5 326.0 59.5C331.0 66.5 335.5 74.0 341.0 80.5C346.5 87.0 353.0 93.5 359.0 98.5C365.0 103.5 371.0 107.6 377.0 110.5C383.0 113.4 392.0 115.0 395.0 115.9 M305.0 -0.5C306.5 3.0 310.2 13.5 314.0 20.5C317.8 27.5 322.5 34.5 327.5 41.5C332.5 48.5 338.2 56.0 344.0 62.5C349.8 69.0 356.0 75.5 362.0 80.5C368.0 85.5 374.5 89.6 380.0 92.5C385.5 95.4 392.5 97.0 395.0 97.9 M320.0 -0.5C321.0 2.0 323.0 9.0 326.0 14.5C329.0 20.0 333.5 26.5 338.0 32.5C342.5 38.5 348.0 45.2 353.0 50.5C358.0 55.8 363.0 60.2 368.0 64.0C373.0 67.8 378.5 70.8 383.0 73.0C387.5 75.2 393.0 76.2 395.0 76.9 M353.0 -0.5C353.5 2.0 354.2 9.5 356.0 14.5C357.8 19.5 360.5 25.0 363.5 29.5C366.5 34.0 370.2 38.2 374.0 41.5C377.8 44.8 382.5 47.4 386.0 49.0C389.5 50.6 393.5 50.8 395.0 51.1 M242.0 2.5C242.5 5.5 243.2 14.0 245.0 20.5C246.8 27.0 249.8 35.2 252.5 41.5C255.2 47.8 258.8 53.0 261.5 58.0C264.2 63.0 267.8 69.2 269.0 71.5 M270.2 95.5C268.8 95.5 263.5 96.2 261.8 95.5C260.1 94.8 259.5 92.4 260.1 91.2C260.7 90.0 263.3 88.2 265.4 88.3C267.5 88.4 269.8 89.7 272.6 91.9C275.4 94.1 280.0 98.1 282.2 101.5C284.4 104.9 285.8 108.7 285.8 112.3C285.8 115.9 284.4 119.7 282.2 123.1C280.0 126.5 275.4 130.4 272.6 132.7C269.8 135.0 267.4 136.5 265.4 136.8C263.4 137.1 262.0 136.7 260.6 134.4C259.2 132.1 258.6 128.0 257.0 123.1C255.4 118.2 252.8 110.5 251.0 105.1C249.2 99.7 247.2 94.7 246.2 90.7C245.2 86.7 244.6 83.7 245.0 81.1C245.4 78.5 245.8 76.5 248.6 75.1C251.4 73.7 257.0 72.7 261.8 72.7C266.6 72.7 274.8 74.7 277.4 75.1 M393.0 148.0C390.8 146.7 383.5 139.7 380.0 140.0C376.5 140.3 373.3 145.8 372.0 150.0C370.7 154.2 372.0 162.5 372.0 165.0" fill="none" stroke="#fff" stroke-width="1.500" opacity=".86"/>
<ellipse cx="189.500" cy="56.500" rx="1.800" ry="2.400" fill="#0753b6"/>
<circle cx="153" cy="59.500" r="4.500" fill="none" stroke="#f6f6f2" stroke-width="1.200"/>
<circle cx="187" cy="87.500" r="6.500" fill="none" stroke="#f6f6f2" stroke-width="1.200" stroke-dasharray="3 2"/>
<circle cx="192" cy="9.500" r="4.500" fill="none" stroke="#f6f6f2" stroke-width="1" stroke-dasharray="2.500 2"/>
<ellipse cx="384" cy="131" rx="5" ry="3" fill="none" stroke="#f6f6f2" stroke-width="1" stroke-dasharray="2.500 2"/>

<path d="M242.0 38.0C244.2 40.0 251.0 45.7 255.0 50.0C259.0 54.3 262.2 58.3 266.0 64.0C269.8 69.7 276.0 80.7 278.0 84.0" fill="none" stroke="#39b6ee" stroke-width="1.300"/>
<path d="M-4.8 0L4.8 0L0 -7.199999999999999Z" fill="#39b6ee" transform="translate(262.5 60.5) rotate(48)"/>
<path d="M248.0 44.5C251.0 45.7 260.0 48.9 266.0 51.5C272.0 54.1 278.7 57.9 284.0 60.0C289.3 62.1 295.7 63.3 298.0 64.0" fill="none" stroke="#e8202a" stroke-width="2.200"/>
<path d="M-4.8 0A4.8 4.8 0 0 1 4.8 0Z" fill="#e8202a" transform="translate(262 49.2) rotate(24)"/><path d="M-4.8 0A4.8 4.8 0 0 1 4.8 0Z" fill="#e8202a" transform="translate(281 58) rotate(27)"/>
<path d="M265.0 93.5C265.8 94.5 269.0 96.4 270.0 99.5C271.0 102.6 270.9 108.7 271.0 112.0C271.1 115.3 271.2 116.2 270.5 119.5C269.8 122.8 267.1 127.5 267.0 131.5C266.9 135.5 269.3 138.7 270.0 143.5C270.7 148.3 271.3 155.5 271.0 160.5C270.7 165.5 269.8 167.1 268.0 173.5C266.2 179.9 263.0 191.8 260.0 199.0C257.0 206.2 251.7 213.6 250.0 216.5" fill="none" stroke="#39b6ee" stroke-width="1.500"/>
<path d="M-4.6 0L4.6 0L0 -6.8999999999999995Z" fill="#39b6ee" transform="translate(271 116) rotate(92)"/><path d="M-4.6 0L4.6 0L0 -6.8999999999999995Z" fill="#39b6ee" transform="translate(269 138) rotate(85)"/><path d="M-4.6 0L4.6 0L0 -6.8999999999999995Z" fill="#39b6ee" transform="translate(270.5 166) rotate(95)"/><path d="M-4.6 0L4.6 0L0 -6.8999999999999995Z" fill="#39b6ee" transform="translate(264 189) rotate(108)"/>
<path d="M265.0 93.5C268.0 94.5 277.2 96.5 283.0 99.5C288.8 102.5 294.3 106.8 300.0 111.5C305.7 116.2 313.7 123.8 317.0 127.5C320.3 131.2 319.5 132.9 320.0 134.0" fill="none" stroke="#e8202a" stroke-width="2.200"/>
<path d="M-4.9 0A4.9 4.9 0 0 1 4.9 0Z" fill="#e8202a" transform="translate(282.5 99) rotate(22)"/><path d="M-4.9 0A4.9 4.9 0 0 1 4.9 0Z" fill="#e8202a" transform="translate(299.4 110.6) rotate(38)"/><path d="M-4.9 0A4.9 4.9 0 0 1 4.9 0Z" fill="#e8202a" transform="translate(316 126) rotate(45)"/>
<circle cx="266" cy="94.500" r="2" fill="none" stroke="#fff" stroke-width=".9"/>

<circle cx="161" cy="16.5" r="14" fill="#000" opacity=".25"/><circle cx="161" cy="15.5" r="13.800" fill="url(#lowg)"/><text x="161" y="22.4" font-size="19.500" font-weight="700" fill="#fff" text-anchor="middle" font-family="Liberation Sans,Noto Sans CJK JP,sans-serif" stroke="#fff" stroke-width=".45">低</text><text x="162" y="39.5" font-size="13" fill="#f4f4f4" text-anchor="middle" font-family="Liberation Sans,sans-serif" stroke="#555" stroke-width="1.600" paint-order="stroke" letter-spacing=".75">1002</text><circle cx="228.5" cy="17" r="14" fill="#000" opacity=".25"/><circle cx="228.5" cy="16" r="13.800" fill="url(#lowg)"/><text x="228.5" y="22.9" font-size="19.500" font-weight="700" fill="#fff" text-anchor="middle" font-family="Liberation Sans,Noto Sans CJK JP,sans-serif" stroke="#fff" stroke-width=".45">低</text><text x="229" y="40.5" font-size="13" fill="#f4f4f4" text-anchor="middle" font-family="Liberation Sans,sans-serif" stroke="#555" stroke-width="1.600" paint-order="stroke" letter-spacing=".75">998</text><circle cx="129" cy="68.5" r="14" fill="#000" opacity=".25"/><circle cx="129" cy="67.5" r="13.800" fill="url(#lowg)"/><text x="129" y="74.4" font-size="19.500" font-weight="700" fill="#fff" text-anchor="middle" font-family="Liberation Sans,Noto Sans CJK JP,sans-serif" stroke="#fff" stroke-width=".45">低</text><text x="132" y="91.5" font-size="13" fill="#f4f4f4" text-anchor="middle" font-family="Liberation Sans,sans-serif" stroke="#555" stroke-width="1.600" paint-order="stroke" letter-spacing=".75">1004</text><circle cx="211.4" cy="92" r="14" fill="#000" opacity=".25"/><circle cx="211.4" cy="91" r="13.800" fill="url(#lowg)"/><text x="211.4" y="97.9" font-size="19.500" font-weight="700" fill="#fff" text-anchor="middle" font-family="Liberation Sans,Noto Sans CJK JP,sans-serif" stroke="#fff" stroke-width=".45">低</text><text x="211.4" y="115.5" font-size="13" fill="#f4f4f4" text-anchor="middle" font-family="Liberation Sans,sans-serif" stroke="#555" stroke-width="1.600" paint-order="stroke" letter-spacing=".75">998</text><circle cx="300.5" cy="63" r="14" fill="#000" opacity=".25"/><circle cx="300.5" cy="62" r="13.800" fill="url(#lowg)"/><text x="300.5" y="68.9" font-size="19.500" font-weight="700" fill="#fff" text-anchor="middle" font-family="Liberation Sans,Noto Sans CJK JP,sans-serif" stroke="#fff" stroke-width=".45">低</text><text x="301" y="86" font-size="13" fill="#f4f4f4" text-anchor="middle" font-family="Liberation Sans,sans-serif" stroke="#555" stroke-width="1.600" paint-order="stroke" letter-spacing=".75">992</text><circle cx="394" cy="23" r="14" fill="#000" opacity=".25"/><circle cx="394" cy="22" r="13.800" fill="url(#highg)"/><text x="394" y="28.9" font-size="19.500" font-weight="700" fill="#fff" text-anchor="middle" font-family="Liberation Sans,Noto Sans CJK JP,sans-serif" stroke="#fff" stroke-width=".45">高</text><text x="378" y="47.5" font-size="13" fill="#f4f4f4" text-anchor="start" font-family="Liberation Sans,sans-serif" stroke="#555" stroke-width="1.600" paint-order="stroke" letter-spacing=".75">10</text><circle cx="388" cy="159" r="14" fill="#000" opacity=".25"/><circle cx="388" cy="158" r="13.800" fill="url(#lowg)"/><text x="388" y="164.9" font-size="19.500" font-weight="700" fill="#fff" text-anchor="middle" font-family="Liberation Sans,Noto Sans CJK JP,sans-serif" stroke="#fff" stroke-width=".45">低</text><text x="374" y="182" font-size="13" fill="#f4f4f4" text-anchor="start" font-family="Liberation Sans,sans-serif" stroke="#555" stroke-width="1.600" paint-order="stroke" letter-spacing=".75">100</text>
<rect x="286.200" y="260" width="101.400" height="29.700" fill="url(#dbg)"/>
<text x="292" y="283.400" font-size="26.500" font-weight="700" fill="#f4f4f6" font-family="Liberation Sans,Noto Sans CJK JP,sans-serif" textLength="26" lengthAdjust="spacingAndGlyphs">10</text>
<text x="319.300" y="283.300" font-size="17" font-weight="700" fill="#f4f4f6" font-family="Liberation Sans,Noto Sans CJK JP,sans-serif">日</text>
<text x="350.300" y="283.400" font-size="26.500" font-weight="700" fill="#f4f4f6" font-family="Liberation Sans,Noto Sans CJK JP,sans-serif">6</text>
<text x="366.300" y="283.300" font-size="17.500" font-weight="700" fill="#f4f4f6" font-family="Liberation Sans,Noto Sans CJK JP,sans-serif">時</text>
</svg>
</div>

<div id="dock" style="position:absolute;left:27.400px;top:458.400px;width:745.400px;height:38px;border-radius:9px;background:linear-gradient(90deg,#8663dd 0%,#8a62de 30%,#9a5ae2 50%,#b24eea 72%,#b14aea 90%,#a648e6 100%);box-shadow:0 0 0 .5px rgba(255,255,255,.18) inset"></div>
<svg style="position:absolute;left:32.7px;top:463.6px" width="24.4" height="24.4" viewBox="0 0 48 48"><defs><clipPath id="cf"><rect width="48" height="48" rx="11"/></clipPath><linearGradient id="fg" x1="0" y1="0" x2="0" y2="1"><stop offset="0" stop-color="#3fb3f6"/><stop offset="1" stop-color="#1c7be6"/></linearGradient></defs>
<g clip-path="url(#cf)"><rect width="48" height="48" fill="url(#fg)"/><path d="M27 0C23 9 21 18 21 27H27C26 35 27 42 29 48H48V0Z" fill="#eaf0f6"/><path d="M27 0C23 9 21 18 21 27H27C26 35 27 42 29 48" fill="none" stroke="#1a3a6a" stroke-width="1.600"/><path d="M10 31C17 38 31 38 38 31" fill="none" stroke="#16315a" stroke-width="2.200" stroke-linecap="round"/><path d="M14 13V19M35 13V19" stroke="#16315a" stroke-width="2.400" stroke-linecap="round"/></g></svg>
<svg style="position:absolute;left:65.1px;top:463.6px" width="24.4" height="24.4" viewBox="0 0 48 48"><rect width="48" height="48" rx="11" fill="#d9cdea"/><rect x="9" y="9" width="8.500" height="8.500" rx="2.500" fill="#4fc25a"/><rect x="20" y="9" width="8.500" height="8.500" rx="2.500" fill="#f5b73a"/><rect x="31" y="9" width="8.500" height="8.500" rx="2.500" fill="#f08c2e"/><rect x="9" y="20" width="8.500" height="8.500" rx="2.500" fill="#e2453c"/><rect x="20" y="20" width="8.500" height="8.500" rx="2.500" fill="#9aa3ad"/><rect x="31" y="20" width="8.500" height="8.500" rx="2.500" fill="#e6516a"/><rect x="9" y="31" width="8.500" height="8.500" rx="2.500" fill="#9d4ccf"/><rect x="20" y="31" width="8.500" height="8.500" rx="2.500" fill="#3f9cf0"/><rect x="31" y="31" width="8.500" height="8.500" rx="2.500" fill="#3fc3a0"/></svg>
<svg style="position:absolute;left:97.6px;top:463.6px" width="24.4" height="24.4" viewBox="0 0 48 48"><defs><linearGradient id="sg" x1="0" y1="0" x2="0" y2="1"><stop offset="0" stop-color="#3fb0f3"/><stop offset="1" stop-color="#1d74dc"/></linearGradient></defs><rect width="48" height="48" rx="11" fill="#eef0f4"/><circle cx="24" cy="24" r="19" fill="url(#sg)"/><path d="M36 12 21 21 27 27Z" fill="#f0483e"/><path d="M12 36 21 21 27 27Z" fill="#fff"/></svg>
<svg style="position:absolute;left:130.0px;top:463.6px" width="24.4" height="24.4" viewBox="0 0 48 48"><defs><linearGradient id="mg" x1="0" y1="0" x2="0" y2="1"><stop offset="0" stop-color="#5fe070"/><stop offset="1" stop-color="#23b93c"/></linearGradient></defs><rect width="48" height="48" rx="11" fill="url(#mg)"/><ellipse cx="24" cy="22.500" rx="16" ry="13" fill="#eef7ec"/><path d="M13 31C13 36 11 38 9 39.500C14 39.500 18 38 20 34Z" fill="#eef7ec"/></svg>
<svg style="position:absolute;left:162.4px;top:463.6px" width="24.4" height="24.4" viewBox="0 0 48 48"><defs><linearGradient id="ml" x1="0" y1="0" x2="0" y2="1"><stop offset="0" stop-color="#3aa6fb"/><stop offset="1" stop-color="#1a6fe8"/></linearGradient></defs><rect width="48" height="48" rx="11" fill="url(#ml)"/><rect x="7" y="13" width="34" height="22" rx="3" fill="#f2f3f6"/><path d="M8 14 24 27 40 14M8 34 20 24M40 34 28 24" fill="none" stroke="#c9a6a6" stroke-width="1.300"/></svg>
<svg style="position:absolute;left:194.9px;top:463.6px" width="24.4" height="24.4" viewBox="0 0 48 48"><defs><clipPath id="cm"><rect width="48" height="48" rx="11"/></clipPath></defs><g clip-path="url(#cm)"><rect width="48" height="48" fill="#e9efe6"/><circle cx="42" cy="8" r="22" fill="#7fd08a"/><circle cx="42" cy="8" r="13" fill="#a6e0a8"/><path d="M0 30 14 48H0Z" fill="#f19fc0"/><path d="M26 48C30 40 40 38 48 40V48Z" fill="#f6d04c"/><path d="M14 0H22V30H14Z" fill="#3f8ef0"/><path d="M0 22H48" stroke="#fff" stroke-width="3"/><circle cx="18" cy="30" r="9.500" fill="#2f7fee" stroke="#fff" stroke-width="2"/><path d="M18 24 22.500 35 18 32.500 13.500 35Z" fill="#fff"/></g></svg>
<svg style="position:absolute;left:227.3px;top:463.6px" width="24.4" height="24.4" viewBox="0 0 48 48"><rect width="48" height="48" rx="11" fill="#f6f6f8"/><ellipse cx="24" cy="14" rx="6.500" ry="10" fill="#f6a330" opacity=".85" transform="rotate(0 24 24)"/><ellipse cx="24" cy="14" rx="6.500" ry="10" fill="#f3d13a" opacity=".85" transform="rotate(45 24 24)"/><ellipse cx="24" cy="14" rx="6.500" ry="10" fill="#9fd04a" opacity=".85" transform="rotate(90 24 24)"/><ellipse cx="24" cy="14" rx="6.500" ry="10" fill="#4fc08a" opacity=".85" transform="rotate(135 24 24)"/><ellipse cx="24" cy="14" rx="6.500" ry="10" fill="#4aa6e8" opacity=".85" transform="rotate(180 24 24)"/><ellipse cx="24" cy="14" rx="6.500" ry="10" fill="#7a78e0" opacity=".85" transform="rotate(225 24 24)"/><ellipse cx="24" cy="14" rx="6.500" ry="10" fill="#c86ad0" opacity=".85" transform="rotate(270 24 24)"/><ellipse cx="24" cy="14" rx="6.500" ry="10" fill="#f0605a" opacity=".85" transform="rotate(315 24 24)"/></svg>
<svg style="position:absolute;left:259.7px;top:463.6px" width="24.4" height="24.4" viewBox="0 0 48 48"><defs><linearGradient id="ft" x1="0" y1="0" x2="0" y2="1"><stop offset="0" stop-color="#5fe070"/><stop offset="1" stop-color="#23b93c"/></linearGradient></defs><rect width="48" height="48" rx="11" fill="url(#ft)"/><rect x="8" y="15" width="23" height="18" rx="4.500" fill="#eef7ec"/><path d="M32.500 22 40 16.500V31.500L32.500 26Z" fill="#eef7ec"/></svg>
<svg style="position:absolute;left:292.1px;top:463.6px" width="24.4" height="24.4" viewBox="0 0 48 48"><defs><clipPath id="cc"><rect width="48" height="48" rx="11"/></clipPath></defs><g clip-path="url(#cc)"><rect width="48" height="48" fill="#f7f7f7"/><rect width="48" height="14" fill="#f0483e"/></g><text x="20" y="11" font-size="8" fill="#fff" text-anchor="middle" font-family="Liberation Sans,Noto Sans CJK JP,sans-serif" font-weight="700">11月</text><text x="24" y="40" font-size="27" fill="#3a3a3a" text-anchor="middle" font-family="Liberation Sans,sans-serif">10</text></svg>
<svg style="position:absolute;left:324.6px;top:463.6px" width="24.4" height="24.4" viewBox="0 0 48 48"><rect x="3" y="0" width="42" height="48" rx="8" fill="#b98a4a"/><rect x="5" y="0" width="38" height="48" rx="7" fill="#c49a5a"/><circle cx="24" cy="22" r="11" fill="none" stroke="#a87c3c" stroke-width="2"/><circle cx="24" cy="19" r="4" fill="#a87c3c"/><path d="M16 29C18 24 30 24 32 29" fill="#a87c3c"/><rect x="44" y="10" width="3" height="6" fill="#e8e8e8"/><rect x="44" y="18" width="3" height="6" fill="#5aa0f0"/><rect x="44" y="26" width="3" height="6" fill="#f08a4a"/><rect x="44" y="34" width="3" height="6" fill="#e25a5a"/></svg>
<svg style="position:absolute;left:357.0px;top:463.6px" width="24.4" height="24.4" viewBox="0 0 48 48"><rect width="48" height="48" rx="11" fill="#f8f8f8"/><circle cx="11" cy="12" r="3.600" fill="#3f8ef0"/><circle cx="11" cy="24" r="3.600" fill="#f0554a"/><circle cx="11" cy="36" r="3.600" fill="#f4a93a"/><path d="M19 12H42M19 24H42M19 36H42" stroke="#d4d4d8" stroke-width="1.600"/></svg>
<svg style="position:absolute;left:389.4px;top:463.6px" width="24.4" height="24.4" viewBox="0 0 48 48"><defs><clipPath id="cn"><rect width="48" height="48" rx="11"/></clipPath></defs><g clip-path="url(#cn)"><rect width="48" height="48" fill="#fbf9f2"/><rect width="48" height="13" fill="#f9d24a"/><path d="M0 23H48M0 32H48M0 41H48" stroke="#e2ded2" stroke-width="1.200"/></g></svg>
<svg style="position:absolute;left:421.9px;top:463.6px" width="24.4" height="24.4" viewBox="0 0 48 48"><rect width="48" height="48" rx="11" fill="#1d1d20"/><path d="M14.500 19.500c.9-1.100 1.400-2.400 1.300-3.700-1.200.1-2.600.8-3.400 1.800-.8.900-1.400 2.200-1.200 3.500 1.300.1 2.500-.6 3.300-1.600zM15.700 21.500c-1.800-.1-3.400 1-4.200 1-.9 0-2.200-1-3.600-.9-1.900 0-3.600 1.100-4.500 2.800" fill="none"/><path d="M13.800 18.200c.7-.8 1.100-1.900 1-3-1 .1-2.100.7-2.800 1.500-.6.700-1.100 1.800-1 2.900 1.100.1 2.100-.5 2.800-1.400zm1 1.600c-1.500-.1-2.800.9-3.500.9s-1.800-.8-3-.8c-1.500 0-3 .9-3.700 2.300-1.600 2.700-.4 6.800 1.100 9 .8 1.100 1.700 2.300 2.900 2.300 1.100 0 1.600-.7 3-.7s1.800.7 3 .7 2-1.100 2.800-2.200c.9-1.300 1.200-2.500 1.200-2.600 0 0-2.400-.9-2.400-3.600 0-2.300 1.800-3.300 1.900-3.400-1-1.600-2.700-1.800-3.300-1.900z" fill="#fff"/><text x="31.500" y="33.500" font-size="17" fill="#fff" text-anchor="middle" font-family="Liberation Sans,sans-serif" font-weight="700">tv</text></svg>
<svg style="position:absolute;left:454.3px;top:463.6px" width="24.4" height="24.4" viewBox="0 0 48 48"><defs><linearGradient id="mu" x1="0" y1="0" x2="0" y2="1"><stop offset="0" stop-color="#fb5c74"/><stop offset="1" stop-color="#f5293f"/></linearGradient></defs><rect width="48" height="48" rx="11" fill="url(#mu)"/><path d="M19 14 35 10.500V30.500" fill="none" stroke="#fff" stroke-width="3"/><path d="M19 14V34" stroke="#fff" stroke-width="3"/><path d="M19 13 35 9.500V15L19 18.500Z" fill="#fff"/><ellipse cx="15" cy="34.500" rx="5" ry="4" fill="#fff"/><ellipse cx="31" cy="31" rx="5" ry="4" fill="#fff"/></svg>
<svg style="position:absolute;left:486.7px;top:463.6px" width="24.4" height="24.4" viewBox="0 0 48 48"><defs><linearGradient id="pc" x1="0" y1="0" x2="0" y2="1"><stop offset="0" stop-color="#c560e8"/><stop offset="1" stop-color="#8a32c8"/></linearGradient></defs><rect width="48" height="48" rx="11" fill="url(#pc)"/><circle cx="24" cy="22" r="14" fill="none" stroke="#f3e6fa" stroke-width="2.600"/><circle cx="24" cy="22" r="8" fill="none" stroke="#f3e6fa" stroke-width="2.600"/><circle cx="24" cy="21" r="3.600" fill="#f3e6fa"/><rect x="21" y="26.500" width="6" height="13" rx="3" fill="#f3e6fa"/><rect x="14" y="32" width="20" height="12" fill="url(#pc)" opacity="0"/></svg>
<svg style="position:absolute;left:519.1px;top:463.6px" width="24.4" height="24.4" viewBox="0 0 48 48"><defs><linearGradient id="as" x1="0" y1="0" x2="0" y2="1"><stop offset="0" stop-color="#2fb4f8"/><stop offset="1" stop-color="#1a6ee6"/></linearGradient></defs><rect width="48" height="48" rx="11" fill="url(#as)"/><path d="M24 11 13 33M24 11 35 33M21 15 27 9M8 29H40M11 37 13 33M37 37 35 33" fill="none" stroke="#fff" stroke-width="3.200" stroke-linecap="round"/></svg>
<svg style="position:absolute;left:551.6px;top:463.6px" width="24.4" height="24.4" viewBox="0 0 48 48"><defs><linearGradient id="st" x1="0" y1="0" x2="0" y2="1"><stop offset="0" stop-color="#d4d5d9"/><stop offset="1" stop-color="#9a9ca3"/></linearGradient></defs><rect width="48" height="48" rx="11" fill="url(#st)"/><circle cx="24" cy="24" r="21" fill="#4c4e54"/><circle cx="24" cy="24" r="17.500" fill="none" stroke="#7e8087" stroke-width="3.500" stroke-dasharray="3 1.500"/><circle cx="24" cy="24" r="13" fill="#8b8d94"/><circle cx="24" cy="24" r="10" fill="#55575e"/><path d="M24 24V9M24 24 11 31.500M24 24 37 31.500" stroke="#9a9ca3" stroke-width="2.800"/><circle cx="24" cy="24" r="3.200" fill="#3c3e43"/></svg>
<svg style="position:absolute;left:584.0px;top:463.6px" width="24.4" height="24.4" viewBox="0 0 48 48"><defs><linearGradient id="fb" x1="0" y1="0" x2="0" y2="1"><stop offset="0" stop-color="#c86fe0"/><stop offset="1" stop-color="#9a3fc6"/></linearGradient></defs><rect width="48" height="48" rx="11" fill="url(#fb)"/><path d="M13 11H35C37 11 38.500 12.500 38.500 14.500V28C38.500 30 37 31.500 35 31.500H22L15 38V31.500H13C11 31.500 9.500 30 9.500 28V14.500C9.500 12.500 11 11 13 11Z" fill="#f6ecfa"/><rect x="22.400" y="14" width="3.200" height="10" rx="1.200" fill="#a84fd0"/><circle cx="24" cy="27.500" r="1.900" fill="#a84fd0"/></svg>
<div style="position:absolute;left:628.6px;top:476.8px;width:28.6px;height:13px;border-radius:2.500px;background:#17121c"></div>
<div style="position:absolute;left:628.6px;top:477.300px;width:28.6px;height:6px;color:#fff;font-size:4.800px;line-height:6px;text-align:center;font-weight:700;white-space:nowrap"><span style="color:#3a9bf0">11</span>/<span style="color:#f0483e">17</span>°c</div>
<div style="position:absolute;left:628.6px;top:483.800px;width:28.6px;height:6px;color:#fff;font-size:5.200px;line-height:6px;text-align:center;font-weight:700;white-space:nowrap">20%</div>
<div style="position:absolute;left:632.500px;top:483.100px;width:21px;height:.5px;background:#bbb"></div>
<svg style="position:absolute;left:634px;top:462.500px" width="18" height="12" viewBox="0 0 36 24"><circle cx="26" cy="12" r="7" fill="#f6563a"/><path d="M6 14a5 5 0 0 1 5-8 6 6 0 0 1 11 2 4.500 4.500 0 0 1-1 9H9a4 4 0 0 1-3-3z" fill="#f4ecf6"/><path d="M12 18 16 23 21 17Z" fill="#b05ad0"/></svg>
<div style="position:absolute;left:641.6px;top:493.300px;width:2px;height:2px;border-radius:50%;background:#1a0c3a"></div>
<div style="position:absolute;left:43.900px;top:493.300px;width:2px;height:2px;border-radius:50%;background:#120a30"></div>
<div style="position:absolute;left:619.100px;top:464px;width:.8px;height:27px;background:rgba(60,20,110,.45)"></div>
<div style="position:absolute;left:698.600px;top:464px;width:.8px;height:27px;background:rgba(60,20,110,.45)"></div>
<svg style="position:absolute;left:663.3px;top:463.6px" width="24.400" height="24.400" viewBox="0 0 48 48"><defs><linearGradient id="ba" x1="0" y1="0" x2="0" y2="1"><stop offset="0" stop-color="#4fb8f6"/><stop offset="1" stop-color="#1c7ee4"/></linearGradient></defs><rect width="48" height="48" rx="11" fill="url(#ba)"/><path d="M24 25C22 18 22 12 24 7C26 12 26 18 24 25ZM24 25C31 27 36 30 39 35C33 35 28 31 24 25ZM24 25C20 31 15 35 9 35C12 30 17 27 24 25Z" fill="#e8f4fc" stroke="#e8f4fc" stroke-width="1.500" stroke-linejoin="round"/><circle cx="24" cy="25" r="2.200" fill="#1c7ee4"/></svg><svg style="position:absolute;left:707.500px;top:464.500px" width="29.500" height="24" viewBox="0 0 59 48"><defs><linearGradient id="fo" x1="0" y1="0" x2="0" y2="1"><stop offset="0" stop-color="#6cc6f6"/><stop offset="1" stop-color="#4aa9ee"/></linearGradient></defs><path d="M2 6C2 3.500 3.500 2 6 2H20C22 2 23 3 24.500 5L26 7H53C55.500 7 57 8.500 57 11V42C57 44.500 55.500 46 53 46H6C3.500 46 2 44.500 2 42Z" fill="#3e97e0"/><rect x="2" y="10" width="55" height="36" rx="4" fill="url(#fo)"/><circle cx="29.500" cy="28" r="8" fill="#3690dc"/><path d="M29.500 23V32M25.500 28.500 29.500 32.500 33.500 28.500" fill="none" stroke="#6cc6f6" stroke-width="2.200"/></svg><svg style="position:absolute;left:743.500px;top:461.500px" width="22" height="28" viewBox="0 0 44 56"><defs><linearGradient id="tr" x1="0" y1="0" x2="1" y2="0"><stop offset="0" stop-color="#d8d4dc"/><stop offset=".5" stop-color="#f0eef0"/><stop offset="1" stop-color="#d2ccd8"/></linearGradient></defs><path d="M3 10H41L36.500 52C36 54.500 34.500 55.500 32 55.500H12C9.500 55.500 8 54.500 7.500 52Z" fill="url(#tr)" opacity=".95"/><ellipse cx="22" cy="10" rx="19.500" ry="5.500" fill="#e8e6ea"/><ellipse cx="22" cy="10" rx="16" ry="4" fill="#55505a"/><path d="M8 9 13 4 18 8 23 3 28 8 33 4 36 9 30 12 22 10 14 12Z" fill="#f4f4f4"/><path d="M12 6 15 9M26 5 24 9M31 7 29 10" stroke="#555" stroke-width="1"/></svg><div style="position:absolute;left:310.2px;top:462px;width:9.800px;height:9.800px;border-radius:50%;background:#f0443c;color:#fff;font-size:6.500px;line-height:9.800px;text-align:center;font-weight:700">1</div><div style="position:absolute;left:375.1px;top:462px;width:9.800px;height:9.800px;border-radius:50%;background:#f0443c;color:#fff;font-size:6.500px;line-height:9.800px;text-align:center;font-weight:700">1</div>
</body>
</html>
